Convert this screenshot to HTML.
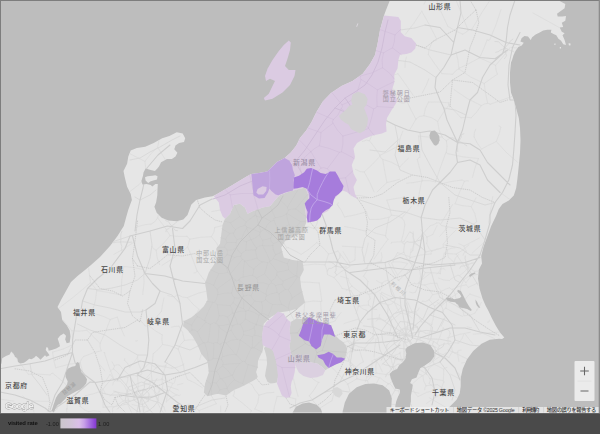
<!DOCTYPE html><html><head><meta charset="utf-8"><title>map</title>
<style>html,body{margin:0;padding:0;background:#bdbdbd;overflow:hidden}body{width:600px;height:434px;position:relative;font-family:"Liberation Sans",sans-serif}svg{position:absolute;left:0;top:0;display:block}svg text{font-family:"Liberation Sans","Noto Sans CJK JP",sans-serif}</style></head><body>
<svg width="600" height="434" viewBox="0 0 600 434">
<rect width="600" height="434" fill="#bdbdbd"/>
<path d="M390 0 L386 10 L383.8 16 L380 30 L377.5 44 L375 55 L370 64 L362.5 74 L352.5 81 L341.5 86 L331 93 L322.8 101.5 L316.6 111.8 L311.4 122.2 L306.2 130.5 L300 138 L296.3 145.5 L290.8 152.4 L284.6 158 L277 162.1 L271.5 167.6 L267.3 171.5 L257.6 173.2 L251.4 173.9 L246.6 176.6 L238.3 181.5 L230 186.5 L217.5 193.8 L212.5 196.2 L205 197.6 L196.1 200 L191.2 204.8 L190 208.3 L187.5 215 L183.3 219.4 L176.7 221.2 L168.3 220.4 L161.7 217.7 L156.7 212.7 L154.4 206.7 L156.1 202.4 L157.3 195.2 L157.5 189.2 L157.8 184 L156.5 169.5 L159 166.4 L161.1 162.3 L167 158.9 L171.9 158.9 L175.5 156.5 L177.4 152.8 L174.3 149.2 L175.5 145.6 L179.1 143.1 L184 141.9 L185.2 138.3 L182.7 133.5 L176.7 132.3 L169.4 135.9 L162.2 138.3 L153.7 143.1 L145.2 146.8 L136.8 148 L130.7 150.4 L128.3 156.5 L127.1 163.7 L123.5 171 L124.7 177 L127.1 186.7 L130.7 194 L131.9 200 L130 205 L128.3 209.7 L126.5 216 L123.8 226 L117.5 236 L110 246 L100 257 L91 265 L85 270 L77.5 276 L71 282 L66 291 L61 300 L57.5 307 L61 312 L62.2 320 L66.7 325.2 L69.7 330.5 L70.5 336.5 L69.7 342.5 L66.7 343.2 L65.2 339.5 L66 335.7 L63.7 333.5 L60 335.7 L57.7 338.7 L59.2 343.2 L60 346.2 L56.2 348.5 L51.7 350 L48.7 350.7 L48 347.7 L46.5 347 L45.7 350 L48 353 L49.5 355.2 L46.5 356.7 L45 355.2 L42.7 357.5 L40.5 359.7 L38.2 357.5 L36 355.7 L34.5 357.5 L31.5 359.3 L29.2 358.7 L26.2 361.2 L24 362.7 L20.2 363.5 L18 362 L17.2 358.2 L15 356.7 L13.5 353.7 L11.2 351.5 L9.7 354.5 L6 356 L2.2 358.2 L1.5 363.5 L0 365 L0 434 L438 434 L442 413 L449.3 407 L452.4 403.9 L456.6 399.8 L459.7 393.6 L460.7 386.3 L460.7 378 L462.8 368.7 L466.9 359.4 L473.2 351 L481.5 343.8 L489.7 339.7 L499 338.8 L502 339 L504.3 337.4 L500 332.4 L496 326 L492 318.5 L488.5 311 L485.5 305.5 L482.5 298.5 L479.5 288.5 L478 278.5 L478.8 269.8 L482 263.5 L481.2 256 L483.8 246 L487.5 236 L491.2 226 L496 216 L498.8 209 L502.5 204 L508.8 200.5 L513.8 195.5 L516.2 188 L517.5 178 L518.8 165.5 L520 153 L520.5 140.5 L520 128 L518.8 118 L516 108 L513.8 100 L511 92.5 L510 82.5 L510 72.5 L511 62.5 L512.1 60 L513.5 55.3 L515.5 51.1 L518.3 47 L521.7 45.6 L523.8 42.8 L520.4 41.5 L521.7 38 L524.5 35.9 L528 36.6 L530.7 40.1 L532.1 37.3 L535.6 34.5 L539.7 32.5 L543.2 30.4 L547.3 29.7 L551.4 29.7 L550.8 32.5 L553.5 33.9 L556.3 35.2 L558.4 38.7 L561.1 40.8 L563.2 44.2 L566 44.9 L564.6 40.1 L562.5 35.2 L564.6 33.2 L561.8 31.8 L559.7 27.6 L563.2 27 L561.8 22.8 L565.3 20.7 L566 15.9 L562.5 16.6 L557.7 16.6 L557 13.8 L559.7 11.7 L564.6 8.3 L565.3 4.1 L557.7 0Z" fill="#e6e6e6"/>
<path d="M288.8 40.5 L290.8 42.5 L290 50 L287.5 58.8 L285 66 L288.8 70 L295.5 70 L294.5 76 L290 85 L282.5 92.5 L272.5 98.8 L265 100.5 L263.8 98 L268.8 93.8 L272.5 86 L275 81 L270 78.8 L266 81 L265 76 L267.5 68.8 L272.5 60 L278.8 51 L283.8 45Z" fill="#dbcbe2"/>
<path d="M356.2 26.6 L357.6 23.2 L358.4 23.6 L357 27Z" fill="#dcd8de"/>
<path d="M568.4 43.4 L570.3 43.2 L570.6 45.2 L569 45.6Z" fill="#e6e6e6"/>
<path d="M559.8 47 L561 47 L561 48.4 L559.8 48.4Z" fill="#e6e6e6"/>
<path d="M554.4 43.6 L555.6 43.6 L555.4 45 L554.4 45Z" fill="#e6e6e6"/>
<clipPath id="lc"><path d="M390 0 L386 10 L383.8 16 L380 30 L377.5 44 L375 55 L370 64 L362.5 74 L352.5 81 L341.5 86 L331 93 L322.8 101.5 L316.6 111.8 L311.4 122.2 L306.2 130.5 L300 138 L296.3 145.5 L290.8 152.4 L284.6 158 L277 162.1 L271.5 167.6 L267.3 171.5 L257.6 173.2 L251.4 173.9 L246.6 176.6 L238.3 181.5 L230 186.5 L217.5 193.8 L212.5 196.2 L205 197.6 L196.1 200 L191.2 204.8 L190 208.3 L187.5 215 L183.3 219.4 L176.7 221.2 L168.3 220.4 L161.7 217.7 L156.7 212.7 L154.4 206.7 L156.1 202.4 L157.3 195.2 L157.5 189.2 L157.8 184 L156.5 169.5 L159 166.4 L161.1 162.3 L167 158.9 L171.9 158.9 L175.5 156.5 L177.4 152.8 L174.3 149.2 L175.5 145.6 L179.1 143.1 L184 141.9 L185.2 138.3 L182.7 133.5 L176.7 132.3 L169.4 135.9 L162.2 138.3 L153.7 143.1 L145.2 146.8 L136.8 148 L130.7 150.4 L128.3 156.5 L127.1 163.7 L123.5 171 L124.7 177 L127.1 186.7 L130.7 194 L131.9 200 L130 205 L128.3 209.7 L126.5 216 L123.8 226 L117.5 236 L110 246 L100 257 L91 265 L85 270 L77.5 276 L71 282 L66 291 L61 300 L57.5 307 L61 312 L62.2 320 L66.7 325.2 L69.7 330.5 L70.5 336.5 L69.7 342.5 L66.7 343.2 L65.2 339.5 L66 335.7 L63.7 333.5 L60 335.7 L57.7 338.7 L59.2 343.2 L60 346.2 L56.2 348.5 L51.7 350 L48.7 350.7 L48 347.7 L46.5 347 L45.7 350 L48 353 L49.5 355.2 L46.5 356.7 L45 355.2 L42.7 357.5 L40.5 359.7 L38.2 357.5 L36 355.7 L34.5 357.5 L31.5 359.3 L29.2 358.7 L26.2 361.2 L24 362.7 L20.2 363.5 L18 362 L17.2 358.2 L15 356.7 L13.5 353.7 L11.2 351.5 L9.7 354.5 L6 356 L2.2 358.2 L1.5 363.5 L0 365 L0 434 L438 434 L442 413 L449.3 407 L452.4 403.9 L456.6 399.8 L459.7 393.6 L460.7 386.3 L460.7 378 L462.8 368.7 L466.9 359.4 L473.2 351 L481.5 343.8 L489.7 339.7 L499 338.8 L502 339 L504.3 337.4 L500 332.4 L496 326 L492 318.5 L488.5 311 L485.5 305.5 L482.5 298.5 L479.5 288.5 L478 278.5 L478.8 269.8 L482 263.5 L481.2 256 L483.8 246 L487.5 236 L491.2 226 L496 216 L498.8 209 L502.5 204 L508.8 200.5 L513.8 195.5 L516.2 188 L517.5 178 L518.8 165.5 L520 153 L520.5 140.5 L520 128 L518.8 118 L516 108 L513.8 100 L511 92.5 L510 82.5 L510 72.5 L511 62.5 L512.1 60 L513.5 55.3 L515.5 51.1 L518.3 47 L521.7 45.6 L523.8 42.8 L520.4 41.5 L521.7 38 L524.5 35.9 L528 36.6 L530.7 40.1 L532.1 37.3 L535.6 34.5 L539.7 32.5 L543.2 30.4 L547.3 29.7 L551.4 29.7 L550.8 32.5 L553.5 33.9 L556.3 35.2 L558.4 38.7 L561.1 40.8 L563.2 44.2 L566 44.9 L564.6 40.1 L562.5 35.2 L564.6 33.2 L561.8 31.8 L559.7 27.6 L563.2 27 L561.8 22.8 L565.3 20.7 L566 15.9 L562.5 16.6 L557.7 16.6 L557 13.8 L559.7 11.7 L564.6 8.3 L565.3 4.1 L557.7 0Z"/></clipPath>
<g fill="none" stroke-linejoin="round" stroke-linecap="round" clip-path="url(#lc)">
<path d="M406 335 L412.2 344.2 L418.5 353.3 L423.3 363.4 L426.6 374.2 M406 335 L409.7 342.1 L412.6 349.6 L419.6 354.7 L421.1 363.2 M406 335 L403.9 343.6 L404 352.6 L404.1 361.4 L398.5 369.5 M406 335 L399.9 342.3 L395 350.4 L389.2 358 L382.1 364.4 M406 335 L398.9 340.4 L391.7 345.5 L385.4 351.7 L381.2 360.3 M406 335 L395.8 336 L385.6 334.6 L375.4 334.1 L366 343.3 M406 335 L395.3 333 L384.4 332.1 L374.2 327.3 L363.3 325.9 M406 335 L397.4 329.3 L388.4 324.1 L380 318 L367.7 319.3 M406 335 L399.2 326.1 L393.1 316.6 L388 306.6 L382.2 296.9 M406 335 L404.8 325.4 L403.2 315.8 L400.8 306.3 L400.1 296.6 M406 335 L407.4 327.1 L408.4 319.1 L408.5 311 L406.4 302.8 M406 335 L414.1 326.2 L423.3 318.4 L428.3 306.7 L438.5 299.7 M406 335 L416 332.4 L426.1 330.4 L436.7 331.7 L443.8 318.6 M406 335 L417.2 336.6 L428.3 338.9 L439.7 339.2 L450.8 341.4 M406 335 L413.5 338.2 L421.3 340.4 L428.4 344.4 L436 347.3 M401.8 340.3 L400.2 337.8 L399.2 335 L399.8 332 L401.7 329.6 L404.5 328.5 L407.3 329.2 L409.9 330.1 L411.6 332.3 L412.9 335 L412.6 338.1 L410.5 340.6 L407.6 342 L404.4 342.1 L401.8 340.3 M405.6 348.9 L399.1 348.3 L394.4 343.6 L393.8 337.4 L394.1 331.9 L396.7 327.1 L400 321.5 L406.4 322 L411.8 323.9 L417.4 326.5 L419.1 332.5 L418 338.2 L415.7 343.3 L411.6 347.8 L405.6 348.9 M418.4 356.9 L407.6 358.8 L396.1 359.6 L387.6 351.8 L382.9 341.9 L381.3 331.1 L387.7 322.3 L393.9 313.7 L404.4 310.3 L414.7 313.4 L422.9 319.6 L432.5 327.1 L430.9 339 L425.3 348.4 L418.4 356.9 M141.5 397 L146.3 396.7 L151.1 396.4 L156 396.2 L160.5 393.7 M141.5 397 L147.4 398.9 L153.3 400.9 L159.3 402.6 L164.2 407 M141.5 397 L145 403.1 L148.9 409 L154.1 414.1 L159.3 419 M141.5 397 L142.1 402.4 L143.1 407.9 L143.7 413.3 L146.8 418.3 M141.5 397 L140.2 402.3 L137.9 407.4 L136.8 412.8 L138.7 418.8 M141.5 397 L135.3 399.4 L129 401.7 L122.5 403.5 L117.6 408.9 M141.5 397 L134.6 395.4 L127.7 393.7 L120.6 393 L113.8 391.1 M141.5 397 L135.7 393 L129.5 389.7 L125.1 383.8 L120.4 378.6 M141.5 397 L139 391.4 L136.3 386 L132.5 381 L129.8 375.6 M141.5 397 L142.6 392 L144.5 387.3 L144.2 381.9 L149.3 378.1 M141.5 397 L145.8 392.9 L150.2 388.9 L153.7 384 L156.8 378.8 M134 396.5 L134.3 392.9 L137.1 390.6 L140.5 390.3 L143.9 389.3 L146.9 391.2 L149.2 394 L148.4 397.5 L148.4 401 L145.3 402.5 L142.7 404.7 L139.4 403.8 L136.7 402.1 L133.9 400 L134 396.5 M153.7 406.6 L148.3 411 L141.6 413.8 L135.3 410.1 L130.3 406.1 L125 400.9 L126.6 393.7 L128.7 386.9 L135.5 384.6 L141.4 382 L147.6 384.1 L154.1 386.9 L155.1 393.8 L158.3 400.7 L153.7 406.6 M505 48 L505.1 50.7 L505.7 53.3 L506.5 55.9 L504.3 58.8 M505 48 L502.8 49.2 L500.4 50.1 L498.3 51.6 L495.8 52.3 M505 48 L502.8 46 L500.7 43.8 L498.5 41.7 L494.9 41.5 M505 48 L506.7 45.6 L508.9 43.6 L510.4 40.9 L512.9 39.2 M505 48 L507.9 49.2 L510.6 50.7 L513.7 51.4 L515.6 54.5 M120.6 242 L121.2 244.2 L121.8 246.4 L121.5 248.8 L121.9 251 M120.6 242 L118.5 242 L116.4 242.2 L114.3 242.6 L112.2 242.7 M120.6 242 L120.9 239.3 L120.7 236.6 L120.9 233.9 L122 231.3 M120.6 242 L123.3 241.9 L126.1 242.1 L128.8 242.4 L131.5 242.1 M171.6 226 L169.9 223.9 L168.5 221.7 L165.7 220.6 L164.6 217.9 M171.6 226 L173.6 224.5 L175.7 223 L177.4 221.2 L179.9 220.2 M171.6 226 L172.9 227.3 L174 228.9 L175.2 230.3 L177.5 230.7 M171.6 226 L170.1 227.3 L168.7 228.8 L166.6 229.3 L165.9 231.7 M414.6 242 L413.7 244.6 L413 247.3 L412.9 250.2 L411 252.5 M414.6 242 L412.1 242.2 L409.5 242.3 L407 241.6 L404.6 243.7 M414.6 242 L413.9 239.3 L413 236.7 L413.4 233.8 L409.9 232 M414.6 242 L416.8 241.1 L419 240.3 L421.5 240.2 L423.2 237.8 M414.6 242 L416.5 244 L418.7 245.7 L421 247.3 L423 249.2 M336 266 L336 268.2 L336 270.4 L334.9 272.5 L336.6 274.8 M336 266 L333.6 267 L331.4 268.3 L328.7 268.4 L327.3 271.4 M336 266 L334.4 264.7 L333 263.1 L331 262.2 L328.9 261.6 M336 266 L337.2 263.1 L338.2 260.1 L339.9 257.4 L340 254.1 M336 266 L338.5 266.7 L341 267.3 L343.7 267.1 L346.4 266.9 M466.5 265 L464.8 265.6 L463 266 L461.1 266 L459.9 268.1 M466.5 265 L466 262.8 L465.7 260.6 L465 258.4 L465.3 256.1 M466.5 265 L468.3 264.3 L470.1 263.9 L471.9 263.1 L473.8 263 M466.5 265 L467.2 267.3 L467.7 269.6 L468 271.9 L469.4 274 M459 141 L456.8 139.9 L454.6 138.7 L452.4 137.7 L449.6 138.1 M459 141 L460 139.1 L461.3 137.2 L461.2 134.8 L463.9 133.7 M459 141 L461 142.1 L463 143.1 L464.8 144.5 L466.7 145.7 M459 141 L458.1 143.5 L457.3 146 L457.6 148.8 L457.7 151.5 M436 351 L437.9 352.7 L439.8 354.3 L441.2 356.5 L443 358.3 M436 351 L435.2 353.4 L434.9 356 L434.5 358.5 L431.8 360.3 M436 351 L433.9 351 L431.7 351.3 L429.6 351 L427.5 350.6 M436 351 L435 348.7 L433.7 346.5 L432.5 344.3 L433.7 341.2 M436 351 L438.3 349.3 L440.9 348 L443.2 346.3 L444.3 343.1 M392.7 367 L395.4 366 L397.7 364.2 L400.9 364.3 L403.5 363 M392.7 367 L394 369.9 L394.9 372.9 L396.8 375.5 L398.5 378.2 M392.7 367 L390.9 369.4 L389.5 372.1 L386.7 373.7 L385.7 376.8 M392.7 367 L390.2 366.3 L387.8 365.4 L385.3 365 L383 363.7 M392.7 367 L393.5 364.3 L394.6 361.8 L394.9 359 L397.3 356.9" stroke="#d5d5d5" stroke-width="0.75"/>
<path d="M559.9 27.9 L532.9 12.9 M0 399.1 L13.7 401.1 M19.5 432.5 L18.9 434 M468.2 30.4 L465.9 32.3 L462.7 34.2 M468.2 30.4 L456 0 M436.6 0 L439.7 8.8 L447.8 26.3 M447.8 26.3 L454.9 30.6 L462.7 34.2 M424.1 4.1 L426 0 M421.8 11.2 L429.2 24.5 L436.4 38.5 M405.4 34.3 L413.8 23.3 L421.8 11.2 M403 36 L383.5 23.8 L382 22.7 M148.5 175.6 L145.9 169.4 L144.9 161.4 M165.4 159.8 L157.7 147.2 M144.9 161.4 L150.6 154 L157.7 147.2 M129.6 191.8 L138.3 185.1 L148.5 175.6 M129.5 153.5 L144.9 161.4 M159 140.1 L157.7 147.2 M52.6 352.1 L53.7 360 L55.7 367.8 M52.6 352.1 L63.5 348.9 L72.9 344.6 M55.7 367.8 L68.7 364.3 L80.1 362.7 M80.1 362.7 L81.5 359.1 L83.5 356.6 M499.7 332 L473.3 334.2 M431.4 43.6 L433 41 L436.3 40.4 M468.2 30.4 L470.4 29.4 L471.3 30.1 M490.1 0 L481.8 12.8 L471.3 30.1 M376.3 49.2 L381.2 51 M401.8 42.6 L391.6 45.9 L381.2 51 M492.7 196.6 L490.6 209.9 L488.6 223.3 M476 197.9 L473.9 202.1 L471.1 206.6 M471.1 206.6 L474.8 213.5 L476.7 221.7 M498.9 191.6 L509.8 199.4 M460.2 291.3 L461.2 285.5 L464 279.3 M470.9 275.3 L467.1 277.4 L464 279.3 M470.9 275.3 L478.4 274.3 M476.5 310.3 L477.2 309.9 L477 309.8 M317.4 110.4 L319.2 110.4 L334.1 108.7 M340.4 103.5 L337.6 106.3 L334.1 108.7 M301.2 254.4 L295 250.9 L288.2 247.6 M301.2 254.4 L309 249.2 L316.8 242.6 M302.7 226.8 L308.2 226.7 L314.1 228.6 M429.2 397.7 L447.7 408.4 M460.7 379.5 L450.8 374.3 M437.4 384.6 L457.5 398.1 M470.3 332.3 L459.5 334.4 L447.1 338 M467.3 358.9 L447.9 349.8 M12.1 352.4 L14.4 355.4 M15.6 357.1 L17.5 359.7 M20.3 363.5 L28.3 374.3 M34.5 422 L33.9 412.1 L32 400.9 M23 396.3 L26.7 399.5 L32 400.9 M142.7 294.6 L144 282.8 L143.6 269.6 M121.4 295.5 L121.6 294.9 L121.2 295.1 M121.2 295.1 L121.7 279.9 L123.9 266.5 M123.9 266.5 L133.5 267.5 L143.6 269.6 M88.5 267.1 L90.5 282.8 M90.5 282.8 L94.6 287.4 L96.7 290.7 M96.7 290.7 L108.5 292.5 L121.2 295.1 M197.2 271.2 L195.6 272.7 L193.9 272.9 M197.2 271.2 L192.8 259.3 L187.7 246.9 M187.7 246.9 L175 257.1 L162.1 265.3 M219.3 248 L216.2 242.5 L211.4 236.7 M219.3 248 L218.2 252.6 L216.8 256.1 M211.4 236.7 L200.6 237.3 L189.7 239.2 M187.7 246.9 L188.5 244 L189.7 239.2 M86.9 330.3 L79.2 331.2 L71.8 330.7 M94.6 313.7 L93.1 312.6 L92.4 311 M71.8 330.7 L63.7 320.9 L62.1 319.2 M72.9 344.6 L72.8 337.3 L71.8 330.7 M83.5 356.6 L93 352.9 L101.2 350.8 M101.2 350.8 L100.1 346.8 L100.1 343.5 M100.1 343.5 L94.2 337.5 L86.9 330.3 M100.1 343.5 L105.6 331.5 L110.2 319.5 M110.2 319.5 L103.1 316.3 L94.6 313.7 M90.5 282.8 L74 296.6 L58.6 308.5 M96.7 290.7 L95.4 300.6 L92.4 311 M267.1 184.8 L253.6 186.7 L239.7 187.1 M239.7 187.1 L236 182.9 M471.1 206.6 L462.2 205.6 L455.1 203.8 M468.5 181 L466.7 180.7 L464.4 181.3 M455.1 203.8 L459 193.5 L464.4 181.3 M442 73.6 L434.7 63.8 L428.4 54.6 M406.4 57 L405.1 62.7 L405 67.4 M431.4 43.6 L428.9 49.9 L428.4 54.6 M517.6 48 L511.2 47.4 M501 9.6 L496.1 24.4 L489.9 39.4 M487.1 40 L489.1 40.5 L489.9 39.4 M355.3 79.1 L353.1 88 L347.6 103.3 M361.3 74.8 L367.7 77.2 L377.8 80.2 M373.9 111.3 L365 111 L354.6 109.8 M340.4 103.5 L344.4 103.8 L347.6 103.3 M383.5 78.2 L380.6 79.3 L377.8 80.2 M383.5 78.2 L386.1 77.5 L387.4 78.2 M398.1 73.8 L393.1 75 L387.4 78.2 M422.3 93 L426.2 85.3 L428.9 78.6 M398.1 73.8 L406.2 85.2 L413.2 95.4 M464.4 181.3 L462.6 180.2 L461.2 180.1 M461.2 180.1 L450.3 181.7 L438.5 184.6 M476.7 221.7 L470.8 226.4 L466.1 229.6 M440.5 224.4 L446 215.1 L452.5 204.7 M441.3 225.5 L453.8 228 L466.1 229.6 M470.9 275.3 L463.2 264.6 L456.2 254.1 M468.9 244.9 L462.3 250.4 L456.2 254.1 M456.2 254.1 L450.1 253.7 L444.3 253.2 M440.3 273.5 L441.5 264.1 L444.3 253.2 M267.1 184.8 L270.7 190 L275.6 196.2 M295.9 172.1 L296.6 177.5 L295.5 182.3 M275.6 196.2 L279.8 196.8 L285.1 196.8 M290.4 152.8 L291.1 153.9 L298.5 167.4 M415.5 292.2 L419.6 283.3 L425.3 272.6 M440.3 273.5 L433.1 272.8 L425.3 272.6 M460.2 291.3 L451.1 297.7 L441.2 306 M440.3 273.5 L440.8 273.7 L440.3 273.5 M437.2 302.5 L438.8 303.4 L441.2 306 M441.2 306 L442.4 307.8 L443.1 311.3 M110.2 319.5 L112.8 318.6 L117.3 317.1 M437.4 384.6 L432 385.1 L426.1 385.7 M446.3 352.8 L437 358.3 L429.1 364.1 M422.9 375.8 L423.6 380.9 L426.1 385.7 M424.6 389.9 L424.9 387.9 L426.1 385.7 M88.4 411.7 L84.2 409.6 L80 406.2 M88.4 411.7 L93.1 410.9 L99.7 411.4 M101.8 390.9 L103 398.1 L103.1 407.2 M101.8 390.9 L94 393.6 L85.4 395.7 M80 406.2 L83.4 400.7 L85.4 395.7 M83.2 376.5 L83.1 378.8 L81.3 380.2 M109.9 380.7 L105.5 385.9 L101.8 390.9 M52.8 373.3 L60.2 379.4 L66.4 384.8 M52.8 373.3 L51 373.8 L50.1 374.9 M66.4 384.8 L67.4 396.3 L67.1 408.6 M48.4 401.3 L52.8 404.6 L57.3 408.6 M66.4 409.1 L67.7 409.2 L67.1 408.6 M83.2 376.5 L82.1 369.3 L80.1 362.7 M28.3 374.3 L38.6 374.2 L50.1 374.9 M32 400.9 L40.7 401.3 L48.4 401.3 M34.5 422 L39.6 421.3 L45.7 422.3 M45.7 422.3 L51.4 414.6 L57.3 408.6 M45.7 422.3 L49 434 M70.2 434 L66.4 409.1 M158.5 214.5 L157.6 217.8 M187 236.4 L177.7 236.4 L170.1 235.6 M157.6 217.8 L164.1 226.4 L170.1 235.6 M159.6 264.6 L157.2 257.8 L156.2 250.1 M189.7 239.2 L187.6 236.8 L187 236.4 M170.1 235.6 L163.1 243.8 L156.2 250.1 M219.3 248 L226.2 247.9 L233.4 248.6 M211.4 236.7 L214 232 L214.7 227.5 M243.9 233.1 L239.3 239.2 L235.7 247.1 M243.9 233.1 L239.4 228.4 L235.1 223.9 M233.4 248.6 L234.3 248.3 L235.7 247.1 M235.1 223.9 L225.1 225 L214.7 227.5 M407.3 102.1 L403 103.2 L399.5 102.3 M407.3 102.1 L411.5 110.9 L415.9 119.1 M415.9 119.1 L412.8 124.7 L410 129.4 M387.4 78.2 L393.9 90.7 L399.5 102.3 M381.5 119.2 L382.3 119.8 L382.2 119.2 M381.5 119.2 L378.2 114.7 L373.9 111.3 M377.2 191.9 L382.8 186.3 L386.9 182.6 M386.9 182.6 L394 180.9 L399.6 179.2 M403.4 197.3 L394.8 198.7 L386.9 200.2 M412.2 265.7 L407.6 259.3 L403.7 252.3 M426 251.9 L420.4 246.6 L413.9 243.4 M403.7 252.3 L403.8 249 L404.6 244.3 M425.3 272.6 L422.4 269.5 L418.8 266.5 M441.1 248.4 L433.5 250.2 L426 251.9 M316.8 242.6 L323.3 247.9 L328.5 254 M303.5 265.3 L314.7 264.1 L324.9 264.8 M328.5 254 L327.1 258.7 L324.9 264.8 M303.5 265.3 L299.9 270.5 L296.3 277.6 M298.4 281.9 L309.3 282.3 L319.2 283 M324.9 264.8 L327 270.1 L327.5 274.6 M328.5 254 L332.3 253.1 L337.9 251.1 M337.9 251.1 L344 259 L349.9 266.5 M349.9 266.5 L341.1 271.7 L333.9 277.5 M333.9 277.5 L331.1 276.3 L327.5 274.6 M239.7 187.1 L240.6 190.5 L240.6 193.6 M211.8 211.6 L223.8 209.3 L236.9 207.2 M240.6 193.6 L238.3 201.1 L236.9 207.2 M238.5 211.7 L237.2 210.2 L236.9 207.2 M275.8 230 L269.2 232.2 L260.7 233.8 M278.5 226 L272.3 217 L267.9 206.3 M256.7 230.7 L259.3 231.9 L260.7 233.8 M256.7 230.7 L257.5 224.9 L256.5 217.6 M256.5 217.6 L259.2 212.9 L261.9 209.1 M302.7 226.8 L299.3 222.5 L294 219.4 M288.2 247.6 L287.5 247.5 L286.8 247.9 M286.8 247.9 L281.7 239.9 L275.8 230 M294 219.4 L292.8 213.2 L292.3 205.3 M275.6 196.2 L272.4 201 L267.9 206.3 M285.1 196.8 L289.6 200.5 L292.3 205.3 M238.5 211.7 L246.9 214.2 L256.5 217.6 M415.5 292.2 L412.8 292.9 L409.9 292.2 M401.1 307.4 L405.8 312 L411.8 318 M412.2 265.7 L406.2 273.7 L398.8 280.2 M388.7 263.1 L395.3 256.8 L403.7 252.3 M388.7 263.1 L393 272 L398.1 280.1 M398.8 280.2 L399.3 280.6 L398.1 280.1 M197.5 271.3 L203.6 279.3 L210.9 286.2 M233.4 248.6 L238.8 263.7 L245.7 276.8 M245.7 276.8 L241.8 279 L238.3 282.9 M229.4 280.8 L233.2 282.5 L238.3 282.9 M296.4 295.7 L296.6 288 L298.4 281.9 M296.4 295.7 L291.5 299.6 L285.2 302.2 M285.2 302.2 L285.7 301.5 L284.3 302.3 M296.3 277.6 L293.9 275.9 L290.9 275.7 M290.9 275.7 L281.4 280.8 L270.8 285.1 M284.3 302.3 L277 294.5 L270.8 285.1 M99.7 411.4 L104.3 417.7 L108.2 424.5 M108.2 424.5 L108.5 434 M137 226.8 L145 224.7 L151.2 224.1 M113.9 254.3 L122.7 249.5 L133.1 242.7 M156.2 250.1 L153.4 248.7 L152.1 246.4 M157.6 217.8 L155.3 221.3 L151.2 224.1 M247.7 276.3 L253.1 263.9 L259.1 253.1 M262.1 250.9 L260.3 252.5 L259.1 253.1 M277.5 257 L278.3 257.5 L277.8 259.5 M235.7 247.1 L248.1 249.6 L259.1 253.1 M245.7 276.8 L246.7 277.1 L247.7 276.3 M265.9 283.9 L264.8 281.6 L262.5 280.4 M260.7 233.8 L261.2 241.8 L262.1 250.9 M399.9 166.8 L391.3 162.2 L382.7 159.4 M399.9 166.8 L403.9 162.6 L408.2 158.6 M398.9 145.5 L389.6 150.7 L380 155.3 M382.7 159.4 L381 158.2 L380 156.2 M380 156.2 L379.1 156.1 L380 155.3 M386.9 182.6 L384.8 171.4 L382.7 159.4 M406.6 183.2 L413.9 182.5 L421.7 181 M422.3 180.7 L422.1 180.6 L421.7 181 M422.3 180.7 L420.4 171.1 L417.3 159.7 M381.5 119.2 L374.5 129.1 L369.5 140.8 M369.5 140.8 L374.7 147.5 L380 155.3 M402.8 131.2 L399.9 138.8 L398.9 145.5 M374.1 192 L369.5 181.7 L364.2 172 M364.2 172 L372.7 164 L380 156.2 M369.5 140.8 L366.4 140.2 L362.4 141.5 M364.2 172 L360.3 171.7 L355.5 169.4 M417.3 159.7 L418.8 157.6 L419.8 157.3 M419.8 157.3 L419.6 146 L418.5 136.1 M435.5 181.9 L440.2 168.1 L445.7 153 M435.5 181.9 L429.3 180.7 L422.3 180.7 M421.7 181 L419.2 193.4 L418 206.1 M440.5 224.4 L439.3 222.9 L436.4 223 M413.9 243.4 L422.3 234.3 L430.3 225.7 M436.4 223 L433.9 224.5 L430.3 225.7 M295.5 182.3 L305.9 186.7 L317.8 192 M292.3 205.3 L303 203.7 L312.2 201.1 M317.8 192 L314.9 196.2 L312.2 201.1 M315.4 164.2 L318 178.1 L321.9 190 M317.8 192 L319.5 191.2 L321.9 190 M347.4 178.1 L348.7 187.5 L351.2 195.7 M368.1 197.2 L359.7 195.5 L351.2 195.7 M334.1 108.7 L333.8 118.2 L332.8 127.4 M328 131 L331.4 128.2 L332.8 127.4 M332.8 127.4 L340.7 128.2 L348.6 127.7 M342.4 158.6 L341.2 150.5 L340.8 144.4 M340.8 144.4 L333.1 140.7 L326.1 138.8 M319.3 147.3 L320.7 145.2 L320.6 144.3 M315.4 164.2 L317.8 161.9 L320.1 159.5 M336.9 178.7 L333.2 170.1 L330.6 162.4 M351.1 161.4 L347.2 159.9 L342.4 158.6 M353.3 136.6 L347.7 141.5 L340.8 144.4 M328 131 L327.3 135 L326.1 138.8 M296.8 144.4 L302.2 145.3 L319.3 147.3 M306.7 129.8 L320.6 144.3 M250.4 305.4 L256.4 303.4 L262.1 301.8 M262.1 301.8 L268.5 305.6 L274.3 310.1 M238.3 282.9 L239.3 291.7 L239.7 301.9 M239.7 301.9 L244.4 303.6 L250.4 305.4 M284.3 302.3 L278.9 305.4 L274.3 310.1 M239.7 301.9 L234.4 307.1 L230.2 314 M262.8 329.7 L259.3 330 L253.9 332.2 M230.2 314 L241.1 322.3 L253.9 332.2 M103.1 407.2 L115.8 406.5 L127.8 403.8 M127.8 403.8 L127.6 404 L127.9 404.5 M135.5 434 L137.2 426.7 M127.9 404.5 L133.2 416.6 L137.2 426.7 M401.1 307.4 L394.2 313.8 L385.6 320.6 M396.1 332.4 L404.2 327.8 L412.8 323.6 M441.7 331.7 L433.9 333 L425.6 333.3 M412.8 323.6 L418.4 329.3 L425.6 333.3 M320.4 434 L308.8 421.3 M335.9 426.7 L327.3 419.2 L319.7 412.6 M308.8 421.3 L313.6 416.7 L319.7 412.6 M295.1 434 L295.2 423.8 M308.8 421.3 L301.1 423 L295.2 423.8 M331.9 400.7 L325.6 404.5 L320.3 408 M319.7 412.6 L320.5 411.3 L320.3 408 M329.1 364.6 L337.9 373.5 L347.7 384 M318.4 382.5 L318 382.3 L319.2 382.3 M318.4 382.5 L314.3 389.5 L309.3 395.8 M331.9 400.7 L333.4 395.5 L334.7 390.8 M320.3 408 L314.5 402.6 L309.3 395.8 M411.3 404.7 L413.5 415.3 L414.5 426.6 M411.6 434 L411.9 431.7 M411.9 431.7 L412.7 428.1 L414.5 426.6 M411.3 404.7 L398.2 404.8 L386.5 404 M401.8 217.9 L404.2 221.1 L404.8 224.8 M401.8 217.9 L397.4 215.9 L391.4 215.2 M391.4 215.2 L390 216.9 L388.9 217.3 M388.9 217.3 L387.2 226 L385.6 235.7 M404.8 224.8 L403.5 233.1 L401.5 240.7 M385.6 235.7 L386.1 237.5 L388.1 239.2 M411.2 206.8 L407.5 211.4 L401.8 217.9 M386.9 200.2 L389.5 207.7 L391.4 215.2 M369.6 219.5 L379.4 219.4 L388.9 217.3 M369.6 219.5 L367.6 215.9 L366.4 211.8 M367.7 229.3 L375.6 233.3 L385.6 235.7 M404.6 244.3 L402.2 242.9 L401.5 240.7 M374.1 258.9 L381.2 248.6 L388.1 239.2 M365.7 231.2 L365.8 230.2 L367.7 229.3 M344.5 216.9 L341.5 210.6 L338.1 205.8 M341.8 229.8 L328.3 228.3 L315 227.8 M315 227.8 L316.9 223.9 L318 219.9 M366.4 211.8 L354.9 215 L344.5 216.9 M338.3 202.8 L337.3 204.8 L338.1 205.8 M365.7 231.2 L355.6 228.6 L344.5 226.5 M314.1 228.6 L313.7 228.7 L315 227.8 M362.8 247.4 L353.4 246.8 L342.3 246.2 M210.9 286.2 L210.5 287.8 L209.7 290.3 M179.1 295.3 L182.6 297.1 L187.3 297.6 M209.7 290.3 L198.3 293.2 L187.3 297.6 M272.2 356.8 L269.7 342.8 L266.5 330.1 M253.9 332.2 L247.3 339.4 L242.3 345.8 M270.2 360.2 L259.4 359.8 L248.3 360.9 M242.3 345.8 L244.8 354 L248.3 360.9 M139.3 318.9 L142.6 323 L144.9 325.3 M117.3 317.1 L120.6 327.4 L124.4 335.9 M135.7 341 L137.1 341 L137.4 340.5 M160.5 434 L164.6 414.1 M173.9 414.9 L168.3 414.1 L164.6 414.1 M127.8 403.8 L129.1 401.4 L128.8 400.6 M157.6 402.9 L160.6 408.6 L164.2 413.9 M164.6 414.1 L163.9 414.7 L164.2 413.9 M396.1 332.4 L396.6 333.7 L396 335 M396 335 L403.7 341.8 L409.5 348.2 M422.9 375.8 L413.2 371.3 L402.7 367.5 M409.5 348.2 L406.5 355.4 L401.6 361.4 M418.8 393.2 L406.7 390.2 L395.9 388 M386.5 404 L387 403.7 L386 402.3 M395.9 388 L391.6 396.1 L386 402.3 M395.9 388 L395.7 381.6 L395 375.3 M385.6 320.6 L378.9 319.2 L372.7 318.5 M372.7 318.5 L373.5 328.3 L373.1 338.5 M396 335 L391.5 340.4 L386.8 345.1 M401.6 361.4 L395.1 356.7 L387.2 353 M386.8 345.1 L386.7 348.4 L387.2 353 M365.9 310 L363 309 L360.2 306.8 M360.2 306.8 L355.4 298.5 L351 290.8 M363.1 270 L364.9 269.3 L366.2 268.6 M401.1 306.4 L391 300.7 L379.9 293.1 M367.4 313.9 L367.6 311 L365.9 310 M333.9 277.5 L338.3 282.6 L342.3 288.6 M342.3 288.6 L347.2 289.5 L351 290.8 M371 259.7 L368.8 263.4 L366.2 268.6 M341 312.6 L337.7 316.8 L335.1 320.9 M321.8 317.4 L321 308.8 L320.6 301.5 M335.1 320.9 L333.2 321.7 L329.5 322.7 M321.7 300.5 L321.9 301.5 L320.6 301.5 M304.8 302.2 L313.6 301 L320.6 301.5 M304.8 302.2 L303.8 313.5 L304 324.2 M319.2 283 L320.6 292.4 L321.7 300.5 M296.4 295.7 L299.9 299.5 L304.8 302.2 M289.5 352.6 L281.2 354.3 L272.2 356.8 M289.5 352.6 L289.9 352 L291.1 350.1 M270.4 327.5 L280.9 328.4 L289.5 330.3 M291.1 350.1 L289.9 339.9 L289.5 330.3 M285.2 302.2 L291 314.7 L297.2 326.1 M289.5 330.3 L292.6 328.3 L297.2 326.1 M297.2 326.1 L299.9 324.9 L302.9 325.6 M317 355.1 L321.7 354.9 L325.6 354.6 M317 355.1 L312.2 351.6 L306.9 346.2 M325.6 354.6 L327.2 350.5 L329.7 346 M306.9 346.2 L306.9 338.3 L306.7 331.4 M306.7 331.4 L316.8 334.6 L326.4 337.2 M329.7 346 L328.4 341.5 L326.4 337.2 M328.7 360 L327.9 357.7 L325.6 354.6 M328.7 360 L329.9 362.2 L329.1 364.6 M318.4 382.5 L313.7 379.6 L308.7 374.8 M308.7 374.8 L308.4 369.4 L309.4 362.2 M289.5 352.6 L293.2 357.4 L296 361.6 M329.5 322.7 L327.2 329.4 L326.4 337.2 M349 340.9 L339.5 343.8 L329.7 346 M484.2 83.4 L491 78.6 L497.4 74.2 M484.2 83.4 L470.6 77 L458.7 68.8 M479.5 57.9 L488 61.6 L495.6 65.4 M479.5 57.9 L468.4 63.8 L458.9 68.4 M495.6 65.4 L496.2 70.8 L497.4 74.2 M458.9 68.4 L459.6 68.1 L458.7 68.8 M510 47.6 L503.2 56.4 L495.6 65.4 M487.1 40 L483.3 49.6 L479.5 57.9 M455.9 51.6 L457.9 59.7 L458.9 68.4 M442 73.6 L446.8 73.9 L452.7 74.3 M452.7 74.3 L455.4 71 L458.7 68.8 M415.9 119.1 L419.2 116.6 L423.9 115.7 M418.5 136.1 L431.3 137.3 L442.2 137.1 M442.2 137.1 L439 129.4 L437.6 121.5 M437.6 121.5 L431.7 117.7 L423.9 115.7 M428.4 102.1 L425.4 108.6 L423.9 115.7 M512.4 96.2 L510.1 97.2 L490.1 104.2 M484.2 83.4 L485.4 92.5 L487.7 103.3 M490.1 104.2 L489.5 103.6 L487.7 103.3 M202.3 434 L201.6 429 L199.1 410.5 M212.7 434 L213.6 432.6 L222.7 419.5 M220.6 406 L220.7 412.3 L222.7 419.5 M216.4 403.7 L207.1 407.4 L199.1 410.5 M182 405.7 L177.4 410.2 L173.9 414.9 M182 405.7 L186.2 405.5 L189.2 404.3 M189.2 404.3 L194.7 407.3 L199.1 410.5 M233.2 395.9 L242.5 403.1 L251.4 410.7 M251.4 410.7 L248.8 416.9 L245.1 422.5 M295.2 423.8 L293.8 422.6 L293.5 421.8 M274.8 418.6 L265.7 433.9 L265.7 434 M209.7 290.3 L211.3 298.6 L212.2 307.9 M187.3 297.6 L193.1 304.3 L199 309.3 M230.2 314 L226 315.5 L222.2 317.8 M212.2 307.9 L217.6 312 L222.2 317.8 M224.5 341.8 L223.4 331 L221.8 319 M244.2 367.5 L233.1 366.4 L223.3 367.1 M244.2 367.5 L245.3 375.1 L246 381.8 M234.4 391.1 L225.3 382.1 L216.3 373.9 M224.5 341.8 L223.1 343 L222.5 343.8 M248.3 360.9 L246.4 365 L244.2 367.5 M222.5 343.8 L222.8 355.8 L223.3 367.1 M252 384.7 L248.6 382.6 L246 381.8 M104.3 352.6 L104.6 353.2 L104.7 352.5 M104.3 352.6 L108.8 366.3 L113.7 378.8 M113.7 378.8 L116.2 380.9 L119.9 381 M109.9 380.7 L111 378.9 L113.7 378.8 M127.3 391.8 L127.3 395.6 L128.8 400.6 M127.3 391.8 L124.3 385.6 L119.9 381 M127.3 391.8 L138.8 386.4 L152.3 382.3 M151.8 363.9 L151.1 372.5 L152.3 382.3 M157.6 402.9 L158.7 395.5 L159.3 389.1 M152.3 382.3 L154.8 385.8 L159.3 389.1 M342.8 410.6 L347.7 409 L353.5 407.3 M347.7 384 L347.3 384.4 L347.8 384 M347.8 384 L351.2 395.4 L353.5 407.3 M369.5 431.4 L363.3 419.3 L356.4 408.8 M386 402.3 L379.5 398.9 L373.6 393.4 M328.7 360 L339 359.8 L348.4 361.1 M349 340.9 L350.6 341.6 L351.7 343.7 M351.7 343.7 L350.3 352.6 L348.4 361.1 M373.1 338.5 L368.3 343.9 L364.8 348.1 M351.7 343.7 L358.8 346.8 L364.8 348.1 M487.7 103.3 L484.6 103.9 L481.3 105.6 M481.3 105.6 L466.9 98.3 L454 89.6 M428.4 102.1 L439.3 102 L448.8 102.9 M437.6 121.5 L443.3 112.6 L449.1 104.9 M448.8 102.9 L448.5 104.7 L449.1 104.9 M445.7 153 L446.8 152.4 L446.4 152.3 M442.2 137.1 L443.8 139 L446.4 140.8 M446.4 140.8 L447 146.2 L446.4 152.3 M472.5 177.4 L475.2 167.2 L478.5 158.5 M478.5 158.5 L463 156.9 L449.1 153.9 M449.1 153.9 L447.6 153.8 L446.4 152.3 M274.8 418.6 L273.9 416.5 L272.8 415.9 M272.8 415.9 L264.1 412.9 L254.8 409 M233.2 395.9 L234.3 393.2 L234.4 391.1 M252 384.7 L254.8 389.8 L259 395.2 M254.8 409 L257.8 402.7 L259 395.2 M276.8 376.2 L284.5 376.2 L291.9 377.6 M277.1 396.4 L287.3 396.8 L295.8 399 M298.1 396.4 L295.8 388.2 L293.5 378.9 M273.8 372.6 L275.8 375.4 L276.8 376.2 M259 395.2 L266.6 392.9 L273.9 392.4 M296 361.6 L293.7 370.4 L291.9 377.6 M272.8 415.9 L274.5 406.3 L277.1 396.4 M293.5 421.8 L295.1 409.9 L295.8 399 M199 309.3 L195.4 315.2 L190.5 320.6 M190.5 320.6 L194.6 325.2 L200.1 328.5 M216.4 403.7 L211 395.4 L205 387.4 M178.1 389.7 L172.7 387.9 L167.3 386.2 M202.4 387.7 L194.8 382.9 L187.5 379.5 M376.9 359.7 L375.8 366 L376.1 373.1 M376.1 373.1 L371 376.6 L367.4 380.7 M367.4 380.7 L361.5 380 L356.9 378.7 M356.9 378.7 L356.3 373.3 L355.1 369.3 M364.8 348.1 L365.1 348.8 L366 351.3 M395 375.3 L385 374.4 L376.1 373.1 M348.4 361.1 L352.3 364.5 L355.1 369.3 M373.6 393.4 L369.5 387.2 L367.4 380.7 M347.8 384 L351.8 381.9 L356.9 378.7 M481.3 105.6 L476.6 112.1 L471.2 117.8 M449.1 104.9 L454.3 110.6 L461 117.8 M461 117.8 L466.3 117.2 L471.2 117.8 M446.4 140.8 L448.3 139.2 L448.5 139.3 M500.7 127.4 L499.8 126 L499.2 125.9 M475.7 129.2 L474.4 132.7 L474.1 136.9 M179.1 295.3 L176.6 295.3 L174.7 296.8 M190.5 320.6 L188 321 L183.6 320.7 M144.9 325.3 L145.7 326.2 L148.2 325.3 M148.2 325.3 L155.5 318.1 L161.4 311.4 M161.4 311.4 L162.5 305 L164 297.9 M174.7 296.8 L170.4 296.3 L167.7 295.5 M148.2 325.3 L155.3 330.8 L162.2 334.9 M171.2 327.2 L174.8 326.4 L179 326.3 M496.3 141.5 L488.1 145.5 L481.5 149.1 M496.3 141.5 L506.7 152.8 L518.1 162.7 M500.7 127.4 L499.2 133.9 L496.3 141.5 M474.1 136.9 L477.2 142.9 L481.5 149.1 M187.5 379.5 L184.7 372.6 L183.4 364.8 M179 326.3 L182.6 332.5 L184.4 340.5 M184.4 340.5 L190.4 339.7 L198.1 340.3 M222.5 343.8 L214.3 345.5 L204.2 347.8 M199.7 359.7 L201.5 353.6 L204.2 347.8 M204.2 347.8 L201.6 343.3 L198.1 340.3 M171.8 368.2 L176.9 367.3 L183.3 364.8 M171.8 368.2 L161.9 366.6 L152.5 363.2 M183.3 364.8 L180.9 356.7 L178.2 349.1 M178.2 349.1 L170.3 345.9 L162.5 344.4 M162.5 344.4 L158 349.7 L153.3 353.6 M153.3 353.6 L152.7 358.5 L152.5 363.2 M183.4 364.8 L183.9 363.9 L183.3 364.8 M184.4 340.5 L180.5 344.6 L178.2 349.1 M162.2 334.9 L161.8 338.8 L162.5 344.4" stroke="#dbdbdb" stroke-width="0.75"/>
<path d="M469.7 294.1 L476.6 296.4 L480.2 297.5 M481.6 281.4 L479.9 282.1 L468.3 287.3 M358 319.2 L344.1 323.5 M351.9 286.1 L346.2 290.6 M351.9 286.1 L355.8 289 L360.7 292.8 M360.7 292.8 L358.7 297.6 L356.4 301 M356 313.6 L357.4 309.7 L358.4 306.5 M358.4 306.5 L358.3 303.4 L356.4 301 M482.4 333.1 L481.2 333.6 L480.8 334 M481.4 302.4 L479.7 305.5 L474.9 313.1 M494.6 338.6 L482.4 333.1 M489.4 320.2 L488.9 322.1 L487.4 322.1 M482.2 273.2 L479.1 271.3 M484.9 241.5 L472.2 253.1 M355 260 L355.3 246.9 M363.4 261 L366.3 252.1 L368.2 243.2 M343.2 251.7 L349.8 262.6 M349.8 262.6 L352 261.7 L355 260 M340.5 276.3 L348 278.4 M351.9 285.9 L349.2 282.3 L348 278.4 M349.8 262.6 L349.3 261.9 L349.5 263.1 M381.3 252.6 L382 257 L381 261.2 M381 261.2 L377.3 262.4 L374.4 264.4 M368.1 264.9 L372.1 264.6 L374.4 264.4 M368.1 264.9 L366.7 271.4 L363.5 276.2 M465 333.7 L468.5 338.5 L472.4 343.2 M471.5 327.6 L470.2 327.7 L467.2 326.8 M392.8 262 L400.6 262 L407.5 263.4 M391.5 262.7 L394.5 269.6 L397.6 275.2 M407.4 263.8 L402.9 269 L397.6 275.2 M381 261.2 L381.5 260.8 L381.8 261.7 M392.8 262 L394.5 258.1 L397.5 252.6 M391.6 242.4 L391.2 243.1 L391.3 243.5 M474.9 313.1 L470 315.2 L464 315.7 M469.7 294.1 L466.1 298.1 L462.1 303.1 M464 315.7 L462.7 309.4 L462.1 303.1 M468.3 287.3 L467.3 286.2 L466.2 284.8 M466.2 284.8 L459.2 286.3 L452.4 289.4 M452.4 289.4 L455.2 293.9 L456.2 300.2 M462.1 303.1 L460 302.6 L456.2 300.2 M447.4 249.9 L447.7 254.4 L448.5 257.6 M447.4 249.9 L445.8 247.7 L443.2 247.5 M431.1 253.9 L431 252.4 L431.7 251.3 M443.2 247.5 L436.9 249.2 L431.7 251.3 M420.9 229.8 L426.8 236.9 M437 225.7 L432.7 234.6 M426.8 236.9 L428.9 236.3 L432.7 234.6 M449.7 280.6 L443.9 280 L438.5 278.1 M437.1 273.7 L438.8 272.2 L440.7 268.9 M440.7 268.9 L443.9 268.7 L445.1 269.6 M441.3 291.3 L445.6 289.2 L449.6 287.7 M441.3 291.3 L438.7 288 L436.9 283.3 M458.2 275.2 L454.9 276.5 L450.4 279.5 M479.2 238.1 L463.9 246.1 M466.3 251.2 L464.9 248.9 L463.9 246.1 M465 262.4 L459.8 264 L454.7 264.4 M453.9 262.6 L455.3 258.2 L458.4 254.7 M467 263.2 L465.5 263 L465 262.4 M466.3 251.2 L464.1 252.7 L463 255.4 M454.3 265.6 L455 264.3 L454.7 264.4 M448.5 257.6 L451.5 259.8 L453.9 262.6 M447.4 249.9 L451 248.3 L454.8 247.8 M463.9 246.1 L461.2 244.7 L458.7 243.8 M468.3 267.1 L471.2 269.2 L474.8 271.5 M468.3 267.1 L464.1 272.1 L459.5 275.7 M474.8 271.5 L471 276.3 L465.8 282.8 M459.5 275.7 L463.2 279 L465.8 282.8 M479.1 271.3 L476.2 271.3 L474.8 271.5 M467 263.2 L468.4 264.9 L468.3 267.1 M458.2 275.2 L458.5 275.5 L459.5 275.7 M452.4 289.4 L451.8 289.5 L449.6 287.7 M349.5 343.6 L357.1 340.5 L364.8 337 M349.5 351.6 L355.3 350.6 L359.8 350.4 M341.4 334.5 L341.7 334.7 M341.7 334.7 L346.4 339.1 L349.5 343.6 M346.3 355.7 L347.5 352.8 L349.5 351.6 M363.4 361.7 L359.3 364.2 L356.1 367.3 M372.1 360.8 L371.9 368.5 L370.3 375.5 M356 368.1 L361.3 372.8 L366.9 376.7 M356 368.1 L355.1 367.7 L356.1 367.3 M366.9 376.7 L368.7 376.3 L370.3 375.5 M346.3 355.7 L350.7 362.3 L356.1 367.3 M359.8 350.4 L361.3 356 L363.4 361.7 M349.1 376.4 L356 368.1 M375.4 385.3 L379.3 377.9 M365.4 381.8 L366.9 376.7 M379.3 377.9 L374.7 376.2 L370.3 375.5 M364.8 337 L365 336.6 L365.2 336.4 M358 319.2 L360.6 322 L361.9 322.9 M382.1 283.2 L379.7 282.6 L376.6 280.6 M382.1 283.2 L382 287.3 L380.4 290 M380.4 290 L375.3 293 L368.6 294.2 M367.9 281.4 L367 287.5 L365.3 291.9 M365.3 291.9 L366.7 293.6 L368.6 294.2 M387.8 280.3 L384.4 281.3 L382.1 283.2 M395.1 297.9 L387.5 295.1 L381.6 292.3 M395.1 297.9 L391.3 288.3 L388.9 280.5 M363.5 276.2 L365.4 277.9 L367.9 281.4 M360.7 292.8 L363.8 292.1 L365.3 291.9 M436.9 283.3 L430.4 283.4 L424.8 285.1 M424.8 285.1 L421.9 284.7 L419.2 282.9 M419.2 282.9 L418.5 283.2 L419.8 281.7 M430.5 273.1 L425.2 277.3 L419.8 281.7 M408.6 286.1 L411.9 284.3 L414.6 283.3 M420.6 303.5 L421.4 302.2 L422.6 301.2 M418.9 283.1 L416.5 284.1 L414.6 283.3 M413.6 247 L413.2 234.2 L413.2 231.7 M409 232.7 L409 232.8 L403.8 241.8 M426.6 243.4 L427.3 240.5 L426.8 236.9 M431.1 253.9 L421.3 254.9 L410 257.6 M409.7 256.7 L410.8 252 L411.1 248.9 M431.7 251.3 L429 248.4 L426.6 243.4 M409.7 256.7 L403.8 254.6 L397.5 252.6 M391.6 242.4 L397.3 241.9 L403.8 241.8 M443.5 243.9 L449.7 236.1 L455.8 230.3 M439.8 236.3 L447.4 227.5 M443.2 247.5 L443.4 244.7 L443.5 243.9 M395.3 390.5 L390.6 396.7 M395.3 390.5 L397.5 390.6 L398.3 390.8 M398.3 390.8 L401.5 400.7 M438.1 395.8 L427.8 402.4 L426.5 403.5 M419.7 270.3 L422.3 266.9 L424.7 264.5 M419.7 270.3 L414 264.9 L409 261.5 M409 261.5 L408.9 259.6 L410 258.6 M419.8 281.7 L420.6 276.1 L419.7 270.3 M419.2 282.9 L420 283 L418.9 283.1 M410 257.6 L410.1 257.3 L410 258.6 M445.3 316.7 L443.1 313.6 L442.9 311.9 M442.9 311.9 L444 309.2 L445.9 308.2 M445.9 308.2 L453.8 312.6 L462.5 316.4 M446.5 302.4 L446.5 304.9 L445.9 308.2 M429 299.9 L431.5 302.5 L434.6 306.1 M429 299.9 L430.9 297.4 L432.6 294.7 M434.6 306.1 L439.2 303.2 L442.7 299.5 M432.6 294.7 L437.2 293.7 L440.4 293.2 M440.4 293.2 L442.3 295.7 L442.7 299.5 M422.6 301.2 L425.6 301.5 L429 299.9 M434.6 311.8 L434.9 309.6 L434.6 306.1 M424.8 285.1 L429.6 289.9 L432.6 294.7 M446.5 302.4 L444.7 300.5 L442.7 299.5 M441.3 291.3 L440.6 292.3 L440.4 293.2 M395.1 297.9 L394.8 298.4 L395.7 298.5 M406.4 291.8 L404.5 294.3 L403.4 295.6 M395.3 390.5 L392.1 386.1 L389.7 383.4 M409.3 384.9 L402.9 387.1 L398.3 390.8 M395.7 377.6 L393.1 380.4 L389.7 383.4 M383.3 391.2 L388.1 383.4 M388.1 383.4 L388.3 384.3 L389.7 383.4 M388.1 383.4 L383.2 380.6 L380.2 377.5 M386 355.9 L380.6 356.8 L375.3 359.5 M376 338.6 L374.7 348.1 L374.1 356.9 M374.7 359.4 L375.9 360.2 L375.3 359.5 M372.1 360.8 L372.4 360.8 L374.7 359.4 M382.2 371.7 L379.1 364.9 L375.3 359.5 M391.3 358.8 L392.1 363.2 L393.4 367.6 M391.3 358.8 L394.7 355.4 L400 353.4 M400 353.4 L402 360.7 L405.1 367.5 M395.8 369.4 L395.6 368 L393.4 367.6 M386 355.9 L387.9 357.1 L391.3 358.8 M407.9 368 L408.7 375.9 L411.3 384.8 M407.9 368 L407.1 367.1 L405.1 367.5 M409.3 384.9 L410.4 384.8 L411.3 384.8 M395.7 377.6 L396.2 372.8 L395.8 369.4 M463.5 381 L460.8 379 M460.8 379 L460.5 376.5 L458.4 373 M468.4 361.5 L466.4 362.2 L461.5 363 M425.8 373.7 L420.5 370.1 L414.3 366.9 M425.8 373.7 L425.7 373.4 L426 373.7 M426 373.7 L428 370.7 L428.8 368.7 M408.7 367.4 L407.6 368 L407.9 368 M408.7 367.4 L411.1 368.1 L414.3 366.9 M411.3 384.8 L410.7 385.8 L411.3 384.9 M411.3 384.9 L418.4 378.5 L425.8 373.7 M434.1 364.4 L438.7 366.5 L443.7 369.2 M434.1 364.4 L430.9 366.7 L428.8 368.7 M443.7 369.2 L443.6 375.3 L443.3 380.7 M426 373.7 L428 375.4 L429.7 378.5 M429.7 378.5 L437.2 379.5 L443.3 380.7 M439.4 390.7 L442 386.8 L443.6 382.3 M443.6 382.3 L444.2 382.3 L443.6 381.4 M443.7 369.2 L445.3 367.9 L446.8 367.5 M434.1 364.4 L433.2 360.8 L433.9 358 M448.8 357.6 L442.8 354.6 L438.3 352.7 M376.8 309.5 L373.2 309.2 L371.5 309.3 M380.4 301.3 L380.2 302.2 L381.8 303.7 M371.5 309.3 L370.9 306.7 L368.5 304.9 M368.5 304.9 L368.3 301.1 L370.1 299 M376.3 321.1 L378.7 318.5 L379.6 314.6 M388.2 305.1 L387.8 310.4 L387.4 315 M388.2 305.1 L384.9 303.6 L381.8 303.7 M381.6 292.3 L380.6 295.9 L380.4 301.3 M368.6 294.2 L369.5 296.1 L370.1 299 M395.7 298.5 L395.2 299.8 L394.1 301.8 M388.2 305.1 L391.5 304.1 L394.1 301.8 M358.4 306.5 L363.5 305.4 L368.5 304.9 M419.1 308 L417.7 310.7 L415.4 311.6 M403.4 295.6 L408.4 303.7 L412 311.6 M415.4 311.6 L414.5 311.7 L412 311.6 M458.9 361.3 L458 356.5 L457.6 352.4 M457.6 352.4 L458.3 350.4 L461 350.2 M448.8 357.6 L450.8 354 L452.5 351.7 M457.6 352.4 L454.9 352.8 L452.5 351.7 M435.4 389.9 L432.1 385.8 L429.2 383.5 M435.4 389.9 L426.7 392.4 L417.9 396.7 M429.7 378.5 L430.3 380.2 L429.2 383.5 M411.3 384.9 L413.8 391.6 L417.9 396.6 M400 353.4 L399.5 352.4 L400.7 352.3 M409.9 361.1 L406.3 356.3 L404.7 351.5 M389 334.4 L389.7 334.3 L389.2 334.1 M387.4 315 L390.2 317.1 L391.3 320.3 M391.3 320.3 L390.9 327.7 L389.7 333.7 M394.1 301.8 L397.2 308.4 L400.3 313.4 M391.3 320.3 L396 316.9 L400.3 313.4 M412 311.6 L410.2 312.8 L407.1 314.5 M400.3 313.4 L403.3 313.4 L407.1 314.5 M448.7 344 L453 342.7 L458.8 343 M448.7 344 L448.5 344.1 L448 343.5 M448 343.5 L448.2 339.5 L450 333.7 M463.7 334.4 L462.2 338.2 L458.8 343 M452.5 351.7 L451.6 347.1 L448.7 344 M438.3 352.7 L437.9 348.6 L439.4 345.7 M439.4 345.7 L443.7 344.1 L448 343.5 M447.2 329.3 L449.4 330.8 L450 333.7 M433.9 312.5 L433 319.5 L431.6 324.6 M415.4 311.6 L418.6 316 L421.3 321.8 M421.3 321.8 L426.5 322.4 L431.6 324.6 M437.1 343.4 L439.9 336.6 L443.2 328 M437.1 343.4 L431.7 340.5 L427.9 339.1 M427.9 339.1 L430.3 331 L431.6 324.6 M439.4 345.7 L437.9 344.8 L437.1 343.4 M447.2 329.3 L444.7 329.3 L443.2 328 M445.3 316.7 L443.4 321.7 L441.1 326.3 M431.6 324.6 L432.2 324.3 L431.6 324.6 M416.7 327 L412.3 328.2 L405.8 327.9 M389.7 333.7 L396.1 333.8 L401.7 332.8 M405.8 327.9 L403.7 330.9 L401.7 332.8 M404.7 351.5 L405.3 350.9 L407 349.8 M401.7 332.8 L403.4 333.1 L403.9 334.8 M407 349.8 L405.5 342 L403.9 334.8 M413.2 349.2 L415.7 344.3 L416.7 339.7 M413.2 349.2 L414.9 351.4 L417.7 353.9 M419.8 354.7 L418 354 L417.7 353.9 M419.1 338.6 L418.9 338.9 L416.7 339.7 M409.9 361.1 L414 356.5 L417.7 353.9" stroke="#dbdbdb" stroke-width="0.7"/>
<path d="M145.1 406.2 L153.9 414 M145.1 406.2 L144.3 407.2 L144.4 406.5 M144.4 406.5 L143.2 414 M144.4 406.5 L139.2 406.3 L132.1 404.5 M163.5 406.1 L165.3 411.3 M167.3 361.9 L165.5 366.1 M165.5 366.1 L165.7 366.5 L165.5 366.1 M165.5 366.1 L160.3 366.2 L156.2 367.8 M149 363.3 L152.8 365.8 L156.2 367.8 M141.8 393.4 L145.5 390.2 L149.5 386.7 M141.8 393.4 L145.2 398.2 L148.5 401.4 M157.1 399.8 L156.4 397.2 L156.9 393.7 M156.9 393.7 L152.7 390 L149.5 386.7 M100.1 365 L104.8 370.8 M137.7 393.3 L134.6 395.7 L132.5 396.3 M114.7 380.7 L113.5 382.2 L112.8 385 M114.7 380.7 L113 378 L110 374.4 M110 374.4 L106.1 380.6 L101.8 384.8 M114.7 380.7 L117.5 378.9 L121.1 376.7 M109.9 371.6 L112.1 369.6 L113.4 368.8 M121.1 376.7 L117.5 372.3 L113.4 368.8 M112.1 361.8 L114.2 365.7 M113.4 368.8 L114.5 366.5 L114.2 365.7 M165.5 366.1 L163.6 372.4 L162 379.5 M156.2 367.8 L150.5 373.3 L146.7 377.6 M149.4 381 L156.2 380.4 L161.9 379.6 M162 379.5 L161.8 378.6 L161.9 379.6 M156.9 393.7 L158.7 392 L162.3 388.7 M149.4 381 L150.3 384 L149.5 386.7 M161.9 379.6 L162.8 384.3 L162.3 388.7 M166.3 401.9 L170.8 397.7 L176.7 394.9 M166.3 401.9 L167.1 397 L168.8 390.5 M176.7 394.9 L173.6 393.3 L169.3 390.2 M162.3 388.7 L166.1 390.3 L168.8 390.5 M162 379.5 L167.3 381.7 L173 383.4 M173 383.4 L170.5 387.7 L169.3 390.2 M176.7 394.9 L179.1 395.7 L180.2 395 M126.2 385.1 L127.7 380.6 L127.8 377.1 M121.1 376.7 L125.2 377.6 L127.8 377.1 M130.2 400.9 L127.4 400.4 L123.4 400.9 M123.4 400.9 L120.7 398 L118.7 393.6 M118.7 393.6 L117.1 392.5 L115 391.8 M124.7 358.6 L124.5 360.2 M114.2 365.7 L117.7 364.6 L119.4 365.1 M127.8 377.1 L129.7 375.9 L129.7 375.6 M119.4 365.1 L123.8 370.2 L129.7 375.6 M174.3 382.8 L175.2 380 L175.5 377.2 M177.5 384.9 L182.9 383.5 M175.5 377.2 L180.3 375.4 M100 385.8 L103.4 389.9 L105.5 394 M115 391.8 L112.2 394 L110.1 396 M123.4 400.9 L117.9 404.6 L112.7 407.9 M112.5 414 L112.6 408 M129.7 367.3 L133.6 363 L137.5 357.1 M129.9 375.5 L134.2 375.2 L137.4 376.2 M137.5 357.1 L138.7 364.1 L141.5 371 M137.4 376.2 L139.3 375.3 L140.7 375.1 M141.5 371 L141.8 373.6 L140.7 375.1 M124.5 360.2 L127.4 363.2 L129.7 367.3 M137.7 355.2 L137.5 357.1 M137.7 393.3 L138.2 383.9 L137.4 376.2 M149 363.3 L145.1 367.5 L141.5 371" stroke="#dbdbdb" stroke-width="0.7"/>
<path d="M395 60 L410 62 L425 70 L436 77.5 M400 30 L415 28 L425 25 M416 45 L430 50 L451 55 M443.8 108 L455 110 L466 115 M395 125 L398 140 L395 155 L400 170 L412 175 M420 132.5 L422 150 L430 165 L440 182.5 M370 150 L385 152 L398 140 M360 200 L375 205 L390 210 L405 212 L421.2 217.5 M440 182.5 L455 195 L470 200 L485 205 L495 202.5 M421.2 217.5 L440 220 L460 218 L475 225 L485 240 M445 245 L460 248 L470 255 L480 255 M365 263.8 L362 250 L365 238 L375 228 L390 222 L405 212 M385 262.5 L388 280 L392 295 L395 297.5 M345 270 L348 285 L352 300 L360 322 M375 295 L372 310 L372 325 L378 338 M430 267.5 L435 285 L440 297.5 M450 263.8 L455 280 L460 282.5 M465 262.5 L472 275 L478 285 M440 297.5 L455 305 L470 315 L480 332 M430 315 L445 320 L455 325 M455 340 L470 345 L480 346 M440 362 L450 375 L455 390 L452 400 M425 368 L440 362 M378 338 L380 350 L385 360 L392 370 M355 343 L352 352 L350 365 L355 375 M340 382 L345 372 L352 365 M325 392 L335 390 L349 392 M100 248.5 L115 241 L130 236 M87.5 288.5 L100 290 L112 288 L125 285 L137.5 280 L145 273.5 M82.5 301 L95 305 L110 308 L125 312 L140 312 L146 310 M77.5 324 L90 330 L105 335 L120 345 L137.5 355 L147.5 355 M100 392.5 L110 395 L120 395 M175 345 L190 350 L200 345 M165 362 L175 368 L180 372.5 M190 410 L200 405 L212 400 L225 398 M30 363.8 L32 375 L40 385 L47 395 M150 231 L152 245 L150 258 L145 273.5 M160 291 L172 295 L180 303.5 M135 197 L140 200 L150 195 L156 190 M130 160 L140 158 L150 152 L160 147 L172 140 L180 136" stroke="#d6d6d6" stroke-width="0.8"/>
<path d="M515 0 L510 15 L507.5 27.5 L506 42.5 L502.5 53.8 L490 65 L482.5 77.5 L477.5 92.5 L470 100 L466 115 L462.5 130 L457.5 142.5 L456 152.5 L457.5 162.5 L450 172.5 L440 182.5 L432.5 190 L425 205 L421.2 217.5 L422.5 232.5 L420 247.5 L415 262.5 L410 275 L405 290 L405 305 L410 325 L412.5 338 M460 0 L461 12.5 L457.5 27.5 L453.8 42.5 L451 55 L443.8 67.5 L436 77.5 L435 87.5 L440 100 L443.8 108 L447 120 L457.5 142.5 M457.5 27.5 L472.5 30 L490 35 L506 42.5 L520 45 M451 55 L465 50 L480 57.5 L495 58.8 L507.5 50 M425 25 L440 27.5 L453.8 42.5 M520 32.5 L512.5 47.5 L509 65 L508 85 L510 100 L515 100 L516 115 L515 132.5 L513.8 150 L512.5 165 L508.8 180 L502.5 192.5 L495 202.5 L490 215 L490 222.5 L485 240 L480 255 L470 270 L460 282.5 L450 295 L440 305 L430 315 L420 327 L415 335 M352 118 L365 120 L385 120 L395 125 L407.5 130 L420 132.5 L430 131 L445 135 L457.5 142.5 L470 143.8 L480 150 L487.5 162.5 L500 175 L510 185 M457.5 162.5 L470 160 L480 165 L487.5 180 L500 192.5 M335 262 L350 265 L365 263.8 L385 262.5 L400 257.5 L415 262.5 L432.5 265 L450 263.8 L465 262.5 L480 257.5 M350 272.5 L370 270 L390 267.5 L410 270 L430 267.5 L455 265 M422.5 232.5 L425 252.5 L422.5 272.5 L420 290 L415 310 L413 330 M398 338 L392 325 L387.5 315 L375 295 L360 280 L345 270 L338 262 L333 250 L330 238 L326 225 L322 214 M338 262 L325 262 L312 262 L303 262 M352 352 L355 335 L360 322 L367.5 312.5 L380 302.5 L395 297.5 L415 300 L430 307.5 L442.5 312.5 L452 325 L455 340 L448 352 L440 362 M420 338 L435 333 L450 328 L465 328 L480 332 L495 335 M400 340 L385 342 L370 343 L355 343 L347 347 M400 345 L385 355 L370 365 L355 375 L340 382 L325 392 L312 400 L300 403 L290 408 M412 362 L425 368 L432 378 L435 392 L432 405 M433 352 L445 358 L455 368 L460 380 M110 412.5 L105 405 L100 392.5 L95 382.5 L85 375 L75 362.5 L72.5 352.5 L72.5 340 L75 325 L77.5 310 L80 316 L82.5 301 L87.5 288.5 L97.5 278.5 L110 268.5 L125 248.5 L130 236 L150 231 L167.5 226 L182.5 228.5 L190 221 L200 205 L212 199 M135 231 L137 215 L140 200 L143 188 L147 168 L158 155 L170 145 M50 412 L60 405 L75 395 L90 382 L95 382.5 L112.5 380 L130 375 L147.5 370 L165 375 L180 372.5 L195 367.5 L207.5 362.5 M132.5 236 L137.5 256 L145 273.5 L152.5 283.5 L160 291 L155 303.5 L146 310 L147.5 325 L148.8 340 L147.5 355 L143.8 367.5 L137.5 375 M172.5 228.5 L175 248.5 L170 266 L175 286 L180 303.5 L182.5 324 L175 345 L165 362 M145 273.5 L165 276 L182.5 281 L205 283.5 M117.5 380 L125 367.5 L140 361 L155 363.8 L165 375 L167.5 390 L162.5 405 L160 413 M137.5 375 L152.5 382.5 L165 392.5 L177.5 402.5 L190 410 M130 375 L133 390 L138 400 L140 412 M120 395 L135 397 L150 398 L165 392.5 M0 368.8 L15 366 L30 363.8 L45 361 L60 356 L72.5 352.5 M72.5 352.5 L67.5 367.5 L62.5 382.5 L55 395 L50 410 M0 392 L15 395 L30 400 L45 408 L50 412" stroke="#cecece" stroke-width="1.1"/>
<path d="M476 10 L478.8 22.5 L475 35 L470 47.5 L467.5 60 L465 72.5 L452.5 80 L451 95 L450 108 M452.5 80 L472.5 82.5 L490 95 L500 102.5 L507.5 100 M476 10 L470 0 M416 45 L425 48 L435 40 L445 35 L455 30 L465 20 L476 10 M397 100 L410 98 L425 95 L440 92 L452.5 80 M357 198 L372.5 197.5 L382.5 193.8 L397.5 182.5 L412.5 175 L427.5 177.5 L440 182.5 L452.5 187.5 L470 190 L482.5 197.5 L495 202.5 M448.8 197.5 L450 212.5 L446 227.5 L447.5 242.5 L445 257.5 L435 262.5 L425 265 L415 268 L405 275 M357 198 L362 205 L365 210 L367.5 222.5 L366 235 L375 240 L373.8 255 L370 262.5 L385 270 L395 278 L405 275 M405 275 L412 285 L425 290 L440 292 L452 298 L462 310 L475 320 L490 330 L500 336 M395 278 L385 285 L372 290 L360 295 L348 297 L335 300 M310 222 L318 232 L320 245 L310 255 L305 262 M335 300 L330 310 L333 320 M335 336 L345 332 L355 328 L365 330 L375 335 L390 333 L400 338 L408 340 M345 345 L355 350 L365 350 L375 352 L385 355 L395 358 L403 360 M345 358 L340 370 L335 380 L333 392 L325 400 L318 405 M137.5 221 L135 241 L132.5 258.5 L137.5 266 M137.5 266 L150 268.5 L160 261 L167.5 254.8 L182.5 256 L195 253.5 L210 263.5 M132.5 258.5 L135 276 L130 291 L127.5 303.5 L132.5 316 L140 322 L142.5 310 M90 276 L100 288.5 L112.5 291 L122.5 296 L130 291 M55 360 L67.5 355 L75 340 L87.5 340 L92.5 332.5 L107.5 330 L125 327.5 L137.5 320 L140 322 M87.5 340 L95 352.5 L100 367.5 L102.5 382.5 L100 392.5 L105 400 L112 405 L115 397.5 M15 368.8 L30 371 L42.5 377.5 L47.5 390 L50 402.5 L48 412 M115 397.5 L135 392.5 L160 385 L175 377.5 L190 372.5 L200 382.5 L205 387.5 M115 397.5 L118 405 L125 412 M205 395 L200 402 L195 410 M226 396 L228 405 L225 412 M256 378 L262 385 L270 384 M286 398 L290 404 L296 406 M197 198.8 L200 208 L208 215 L215 220 L222.5 222" stroke="#bfbfbf" stroke-width="0.65" stroke-dasharray="0.6 1.6"/>
</g>
<path d="M154.9 171.1 L150.7 170 L145.6 168.5 L143.5 172.6 L143 175.7 L141.4 180.9 L142.4 184.6 L146.6 184 L150.7 185.1 L152.3 186.6 L155.4 184 L157.8 184 L161 184.5 L161 170 L156.5 169.5Z" fill="#bdbdbd"/>
<path d="M407.3 347 L414.6 343.3 L422.9 342.4 L430.3 345.1 L434 350.7 L434.4 356.2 L430.3 361.7 L424.8 365.4 L420.2 368.2 L418.3 372.8 L416.5 377.4 L411.9 379.2 L410 382.9 L412.8 384.8 L411.9 390.3 L410.9 395.8 L410.9 401.4 L410 406 L409.5 434 L395 434 L395.3 406 L396.2 401.4 L398 396.8 L399.9 393.1 L399.9 389.4 L395.3 388.5 L393.4 384.8 L390.7 378.3 L389.7 373.7 L392.5 370.9 L397.1 369.1 L399 365.4 L402.6 362.6 L405.4 359 L406.3 353.4 L405.4 349.7Z" fill="#bdbdbd"/>
<path d="M342 434 L342.6 412 L344.8 402.5 L349 393.8 L356.7 387.3 L365.3 384.1 L374 383.4 L382.7 385.2 L389.2 390.6 L391.8 398.2 L391.3 406.8 L390.5 434Z" fill="#bdbdbd"/>
<path d="M292 434 L292.8 412.3 L296 406.8 L302.5 403.6 L309 402.5 L316.6 404.7 L320.9 409 L322 412.3 L322 434Z" fill="#bdbdbd"/>
<path d="M77.3 361.9 L79.4 363.3 L80.1 368.1 L81.5 372.3 L84.9 375.7 L87 379.2 L86.3 383.3 L83.5 386.8 L80.1 389.6 L75.9 391.6 L71.8 393.7 L68.3 395.8 L65.6 398.5 L62.8 401.3 L60.7 403.4 L58 404.8 L55.9 407.5 L54.5 411 L53.1 412.6 L51.8 410.3 L53.1 406.2 L54.5 402 L55.9 397.9 L58 394.4 L60.7 391.6 L64.2 388.2 L67 384.7 L67.7 381.3 L65.6 377.1 L65.6 373 L67.7 368.8 L71.8 366.8 L75.3 366.1 L76.2 363.3Z" fill="#bdbdbd"/>
<path d="M445.9 298.1 L448.5 297.6 L454.7 299.2 L459.9 298.1 L461.4 296.6 L459.9 294 L457.3 291.4 L457.8 289.8 L460.9 290.9 L462.5 294 L464.5 298.1 L466.6 302.3 L469.2 306.4 L471.8 310 L470.8 311.1 L467.1 309 L463 308 L459.4 307.5 L458.3 304.9 L455.2 302.3 L450.5 301.8 L446.9 300.2Z" fill="#bdbdbd"/>
<path d="M475.5 299.5 L477 301.8 L478.5 304.9 L480.3 307.7 L478.8 307.7 L476.8 305.4 L475.7 302.8Z" fill="#bdbdbd"/>
<path d="M431.5 130.9 L434.8 130.5 L437.2 132.9 L439.2 136.1 L439.6 140.2 L438.4 143.8 L436 145.8 L434 145 L431.9 141.8 L429.9 138.5 L429.5 135.3 L430.3 132.5Z" fill="#bdbdbd"/>
<path d="M469 275.5 L471.5 273.6 L475 272.6 L475.5 273.6 L472.5 275 L470 277Z" fill="#bdbdbd"/>
<path d="M145 177.3 L147.6 176.3 L152.3 175.7 L155.4 175.2 L157.5 176.3 L157 179.4 L153.3 180.4 L150.2 181.4 L148.2 183 L145.6 180.4Z" fill="#e6e6e6"/>
<path d="M332.8 388.4 L337.2 386.9 L341.5 389.5 L342.6 393.8 L339.3 397.7 L335 396 L332.4 391.7Z" fill="#d8d8d8"/>
<g fill="none" stroke-linejoin="round" stroke-linecap="round">
<path d="M225 218.8 L230 213.8 L233.8 205 L240 203.8 L245 207.5 L247.5 213.8 L252.5 211.2 L262.5 207.5 L270 206.2 L276.2 198.8 L280 195 L290 191.2 L300 188.8 L305 187.5 L307.5 192.5 L308.8 200 L305 207.5 L306.2 217.5 L306.2 222.5 L302.5 232.5 L285 241.2 L281.2 247.5 L283.8 257.5 L292.5 260 L302.5 261.2 L303.8 270 L300 277.5 L301.2 287.5 L302.5 292.5 L305 302.5 L297.5 308.8 L287.5 311.2 L278.8 312.5 L270 317.5 L263.8 323.8 L262.5 333.8 L263.8 343.8 L262.6 351 L260.2 356 L258 360.8 L257.7 367.3 L256.1 372 L257.7 377 L255.3 379.4 L251.3 381.8 L246.5 384.2 L240 387.4 L233.8 390 L226.2 395.5 L217.5 393.8 L207.5 396.2 L203.8 392.5 L205 383.8 L208.8 372.5 L207.5 361.2 L201.2 353.8 L197.5 345 L192.5 336.2 L187.5 330 L183 326.2 L183.8 321.2 L191.2 317.5 L197.5 312.5 L203.8 306.2 L207.5 300 L206.2 290 L205 283 L206.2 280 L208.8 272.5 L213.8 265 L217.5 257.5 L216.2 248.8 L220 243.8 L221.2 235 L222.5 225Z" fill="#cfcfcf"/>
<path d="M220.8 237.8 L225.8 239.2 M225.8 239.2 L227 236.5 L229.9 233.5 M222 228.8 L229.9 233.5 M225.8 239.2 L226.1 240.6 L227.1 242.5 M217.3 247.4 L224.7 247.4 M227.1 242.5 L224.9 245 L224.7 247.4 M216.9 258.7 L221.5 260 M224.7 247.4 L226 248.3 L227 250.2 M227 250.2 L227.4 251.5 L227.2 254.7 M221.5 260 L224.8 257 L227.2 254.7 M289.6 259.2 L287.2 263.8 M297.9 260.7 L297.6 262.2 L296.6 276.1 M287.2 263.8 L288.5 266.6 L288.4 269.8 M288.4 269.8 L292.1 273.4 L295.7 275.8 M295.7 275.8 L297.1 275.5 L296.6 276.1 M300.1 277.9 L297.5 276.9 M297.5 276.9 L296.5 276.5 L296.6 276.1 M277.5 272.1 L276.6 272.8 L276.8 274.9 M277.5 272.1 L282.9 271.2 L288.4 269.8 M276.8 274.9 L280.2 278.9 L283.1 281.1 M283.1 281.1 L288.7 278.5 L295.7 275.8 M298.3 189.2 L287.5 207.2 M287.5 207.2 L277.8 197.2 M307.8 194 L295.7 208.9 M306.1 216.7 L302.3 214 L295.7 208.9 M287.5 207.2 L287.8 209.5 L288.5 210 M295.7 208.9 L291.7 209.2 L288.5 210 M245.1 261.1 L248.8 265.8 L253.8 269.1 M245.1 261.1 L244.2 261.8 L244.6 261 M244.6 261 L243.5 269.2 L243.1 277.1 M243.1 277.1 L248.7 275.8 L252.7 275.4 M253.8 269.1 L253.3 272.5 L252.7 275.4 M221.5 260 L224.3 264.2 L226.8 268.7 M227.2 254.7 L231.3 255.8 L234.7 257.6 M234.7 257.6 L230.1 262.2 L226.8 268.7 M229.6 393 L226.9 388.7 M226.9 388.7 L223.7 388.7 L219.9 390 M217.2 393.8 L219.9 390 M227.1 242.5 L230.6 242.5 L235.9 242.6 M227 250.2 L232.7 249.8 L236.6 247.5 M235.9 242.6 L236.1 244.6 L236.6 247.5 M229.9 233.5 L232.5 232.9 L233.5 233.2 M233.5 233.2 L234.3 236 L237.1 239.8 M235.9 242.6 L236.4 241.5 L237.1 239.8 M240.9 256.2 L237 256.6 L234.7 257.6 M240.9 256.2 L241.6 254.6 L241.3 253.7 M236.6 247.5 L238.3 251 L241.3 253.7 M224.1 221.1 L230.6 222.8 M233.5 233.2 L234.4 231.9 L235.5 229.5 M230.6 222.8 L233 227.1 L235.5 229.5 M234.4 204.9 L239.7 216.6 M230.6 222.8 L235.1 219.9 L239.7 216.6 M277.5 272.1 L273.2 266.2 L269.3 261.9 M276.8 274.9 L274.8 278.6 L271.3 281.1 M264.5 273.8 L268.4 278.2 L271.3 281.1 M264.5 273.8 L266.1 269.2 L267.6 262.7 M269.3 261.9 L268.4 263.3 L267.6 262.7 M287.2 263.8 L279.4 260.9 L273.3 258.6 M273.3 258.6 L271.8 260.4 L270 260.9 M269.3 261.9 L269.7 262 L270 260.9 M264.5 273.8 L260.2 276.3 L256.4 278 M256.4 278 L255.2 276.9 L252.7 275.4 M253.8 269.1 L256.9 265.8 L262 261.9 M267.6 262.7 L263.8 261.9 L262 261.9 M245.1 261.1 L250.3 260.1 L257.1 257.9 M262 261.9 L258.9 260.4 L257.1 257.9 M300.5 221.7 L292.9 217 L287 213.4 M300.5 221.7 L297.3 225.7 L293.3 227.9 M293.3 227.9 L290.4 226.5 L289.1 224.7 M289.1 224.7 L287.6 219.6 L286.4 214.1 M286.4 214.1 L285.9 212.8 L287 213.4 M306.2 221 L304.6 221.5 L300.5 221.7 M288.5 210 L287.7 211.9 L287 213.4 M297.4 235.1 L293.4 230.3 M293.4 230.3 L294.2 228.5 L293.3 227.9 M293.4 230.3 L291 233 L287.5 234.4 M287.5 234.4 L284.7 232.1 L279.9 229.5 M279.9 229.5 L284.8 226.8 L289.1 224.7 M270 206.2 L275.2 217.8 M275.2 217.8 L281.8 216.5 L286.4 214.1 M272.8 245.6 L273.3 249.6 L275.5 254.9 M272.8 245.6 L273 244.4 L273.7 243.7 M273.7 243.7 L277.3 241.9 L279.9 241.1 M275.5 254.9 L282.3 251.6 M279.9 241.1 L283 242.9 L283.9 243.1 M273.3 258.6 L273.6 257.5 L275.5 254.9 M270 260.9 L266.6 253.2 L262.6 245.7 M262.6 245.7 L266.9 245.9 L272.8 245.6 M262.7 240.3 L263.1 242.6 L262.4 245.5 M262.7 240.3 L267 239.2 L270.4 238 M270.4 238 L271.3 241.6 L273.7 243.7 M262.4 245.5 L262.1 245.6 L262.6 245.7 M287.5 234.4 L287.9 239 L287.7 239.9 M232.3 277.9 L231.9 275.5 L230.1 274.5 M232.3 277.9 L224.7 283.4 L217 289.2 M230.1 274.5 L229.5 273.8 L227.4 272.2 M227.4 272.2 L223.5 273.5 L218.9 273.6 M218.9 273.6 L216 279.3 L213.7 285.2 M213.7 285.2 L214.5 286.9 L217 289.2 M240.9 256.2 L241.1 258.2 L242.5 259.3 M242.5 259.3 L235.6 267.7 L230.1 274.5 M226.8 268.7 L227.3 270.4 L227.4 272.2 M210.6 269.8 L218.9 273.6 M205.4 282.1 L213.7 285.2 M197.3 316.7 L194.3 320.5 L191.6 325.2 M197.3 316.7 L200.6 318.2 L204.4 320.6 M204.4 320.6 L205.8 320.6 L205.8 322.4 M205.8 322.4 L201.4 327.3 L197.6 331.9 M191.6 325.2 L191.8 327.3 L192 330.1 M192 330.1 L194.7 330.1 L197.6 331.9 M183.7 321.6 L191.6 325.2 M195.6 314 L197.3 316.7 M212.9 302.2 L208.2 311.5 L204.4 320.6 M212.9 302.2 L206.7 301.4 M189.2 332.2 L192 330.1 M197.9 346 L203.2 342.9 M203.2 342.9 L200.1 337.3 L197.6 331.9 M211.6 395.2 L211.7 392.7 L210.5 383.6 M206.2 380.3 L210.5 383.6 M219.9 390 L218.5 387 L216.4 383.1 M210.5 383.6 L212.6 382.4 L216.4 383.1 M227.1 388 L225.3 383 L221.5 378.7 M227.1 388 L229.9 383.8 L234.6 379.8 M221.5 378.7 L225.7 377.6 L231.5 375.3 M234.6 379.8 L233.5 377.9 L232.4 375.6 M232.4 375.6 L232.8 374.7 L231.5 375.3 M226.9 388.7 L226.4 388.9 L227.1 388 M216.4 383.1 L218.4 380.5 L220.1 378.3 M220.1 378.3 L220.5 378.7 L221.5 378.7 M244 385.4 L242.8 383.5 M242.8 383.5 L239.5 382.6 L234.6 379.8 M244.6 261 L242.8 259.2 L242.5 259.3 M241.3 253.7 L244.1 251.6 L245.6 250.4 M257.1 257.9 L256.2 253.8 L255.3 249.9 M245.6 250.4 L251.4 250 L255.3 249.9 M262.4 245.5 L258.7 246.2 L256.4 248.1 M255.3 249.9 L256.7 249.6 L256.4 248.1 M259.7 234.7 L254.7 238.1 L251.2 239.8 M259.7 234.7 L260.9 237.9 L262.7 240.3 M256.4 248.1 L254 244.7 L251.2 239.8 M246.7 228.4 L244.1 232.7 L241.6 238.9 M246.7 228.4 L249 234.8 L251.1 239.8 M241.6 238.9 L243.9 241 L246.6 241.7 M251.1 239.8 L248.7 240.4 L246.6 241.7 M237.1 239.8 L239 238.8 L241.6 238.9 M245.6 250.4 L246.1 247 L246.6 241.7 M251.2 239.8 L251.3 240.3 L251.1 239.8 M246.8 227.1 L245.6 225.9 L245.7 225.2 M246.8 227.1 L253.5 229.4 L259.9 232.2 M245.7 225.2 L244.9 224.3 L246.1 222.1 M246.1 222.1 L249.9 219 L255.2 215.3 M255.2 215.3 L256.9 215.4 L256.7 216.5 M256.7 216.5 L258.3 223.5 L260.8 231.3 M259.9 232.2 L260.4 232.7 L260.8 231.3 M235.5 229.5 L239.9 226.8 L245.7 225.2 M246.7 228.4 L247.5 227.3 L246.8 227.1 M259.7 234.7 L260.1 233.9 L259.9 232.2 M239.7 216.6 L241.9 218.4 L246.1 222.1 M256 209.9 L255.2 215.3 M274 220.1 L272.8 220.7 L270.8 221.3 M274 220.1 L275.7 224.8 L279 229.4 M270.8 221.3 L267.2 225 L265.2 229.4 M265.2 229.4 L267.4 232.3 L271.5 235.1 M271.5 235.1 L274.4 233.5 L277.4 232.7 M279 229.4 L277.7 230.2 L277.4 232.7 M275.2 217.8 L273.7 218.2 L274 220.1 M256.7 216.5 L264.7 218 L270.8 221.3 M279.9 229.5 L279.9 229.4 L279 229.4 M260.8 231.3 L263.1 230 L265.2 229.4 M270.4 238 L271.9 237.2 L271.5 235.1 M279.9 241.1 L278.5 236.8 L277.4 232.7 M220.1 378.3 L219.2 375.2 L216.7 371.6 M208.6 371 L216.7 371.6 M231.5 375.3 L227.2 369.8 L222.5 366 M216.7 371.6 L219.1 368.5 L222.5 366 M239.7 363.5 L235.5 368.7 L232.4 375.6 M239.7 363.5 L231.8 363.8 L222.9 364.5 M222.9 364.5 L223.2 365 L222.5 366 M256.4 278 L257.9 279.9 L257.6 282.8 M271.3 281.1 L271.2 281.9 L271.1 283 M257.6 282.8 L263.9 282.9 L269 284.6 M271.1 283 L270.2 283.7 L269 284.6 M257.6 282.8 L257.1 284.5 L256.1 287.3 M256.1 287.3 L261.1 291.7 L265.9 294.2 M269 284.6 L266.6 290.3 L265.9 294.2 M252.4 290.1 L252.6 292.8 L251 295.8 M252.4 290.1 L245 285 L239.2 279.9 M251 295.8 L248.2 295 L243.6 296.3 M243.6 296.3 L241.8 288.7 L238.9 280 M239.2 279.9 L238.3 280.2 L238.9 280 M243.1 277.1 L240.5 277.7 L239.2 279.9 M256.1 287.3 L254.3 288.3 L252.4 290.1 M232.3 277.9 L234.1 279 L235.2 279.9 M235.2 279.9 L236.5 280.8 L238.9 280 M242.8 383.5 L245.1 374.8 L248.3 364.6 M248.3 364.6 L257.7 367.4 M213.1 358.2 L211.5 360.2 L208.4 360.3 M213.1 358.2 L213.7 351.6 L213.9 343.3 M208.4 360.3 L207.3 351.9 L204.7 342.9 M213.9 343.3 L210.6 342.8 L208 341.9 M204.7 342.9 L206 343 L208 341.9 M207.5 361.5 L208.4 360.3 M221.6 359.5 L223.1 362.5 L222.9 364.5 M221.6 359.5 L216.8 358.5 L213.1 358.2 M203.2 342.9 L203.1 342.6 L204.7 342.9 M205.8 322.4 L207.4 323 L210.3 324.3 M210.3 324.3 L209.7 332.4 L208 341.9 M283.1 281.1 L283.2 283.5 L281.8 284.1 M271.1 283 L273.7 283.8 L275.2 285.7 M281.8 284.1 L278.1 284.8 L275.2 285.7 M217.6 342.9 L218.5 335.8 L218.9 326.9 M217.6 342.9 L214.8 342.3 L213.9 343.3 M210.3 324.3 L213.6 322.8 L215.6 323.2 M218.9 326.9 L219.4 325.7 L218.3 325.7 M215.6 323.2 L217.9 324.4 L218.3 325.7 M212.9 302.2 L214 302.8 L214.6 302 M219.1 315.8 L218 319.3 L215.6 323.2 M219.1 315.8 L218.2 310.9 L217.4 304.9 M214.6 302 L215.5 303.1 L217.4 304.9 M217 289.2 L218 292.7 L217.6 294.7 M214.6 302 L216.8 298.1 L217.6 294.7 M235.2 279.9 L233.2 285.7 L231.7 293.1 M217.6 294.7 L225.3 293 L231.7 293.1 M221.6 359.5 L221.7 357.2 L223 356.7 M217.6 342.9 L219.1 344.4 L220.8 343.8 M220.8 343.8 L221.1 349.8 L223 356.7 M239.7 363.5 L240.6 362.9 L242.4 361.5 M223 356.7 L229 354.9 L235.6 354.4 M235.6 354.4 L236.4 355.3 L236.4 354.6 M236.4 354.6 L238.7 357.2 L242.4 361.5 M248.3 364.6 L246.5 364 L245.1 361.7 M242.4 361.5 L242.9 360.9 L245.1 361.7 M218.9 326.9 L223.1 330.3 L226.8 332.6 M220.8 343.8 L222.4 342.3 L224.2 342.7 M226.8 332.6 L225.6 336.8 L224.2 342.7 M235.6 354.4 L230 347.8 L226.1 343 M224.2 342.7 L226 342.1 L226.1 343 M297.5 276.9 L292.8 284 L288.2 289.8 M281.8 284.1 L283 286.5 L285.4 289.4 M288.2 289.8 L287.4 289.7 L285.4 289.4 M302.3 291.6 L292.1 298 M288.2 289.8 L291.1 294.5 L292.1 298 M261.8 313.6 L262.5 306.8 L261.4 301.8 M261.8 313.6 L259.5 314.4 L259 315.2 M254.6 301 L250.5 306.6 L248.4 310.4 M254.6 301 L257.6 301.5 L261.4 301.8 M248.4 310.4 L254.4 312.6 L259 315.2 M219.1 315.8 L223.8 315.7 L227.4 317 M218.3 325.7 L224.1 325.3 L230.1 323.9 M227.4 317 L228.7 319.9 L230.1 323.9 M217.4 304.9 L224.4 305 L229.9 305.6 M227.4 317 L230.7 314.6 L232.4 312.9 M229.9 305.6 L231.8 308.5 L232.4 312.9 M230.1 323.9 L231.8 325.7 L232.8 325.7 M232.4 312.9 L233.1 312.9 L233.3 313.3 M233.3 313.3 L236.4 319.6 L237.6 324.1 M237.6 324.1 L235.8 324.3 L232.8 325.7 M226.8 332.6 L228.1 331.6 L231.1 330.2 M226.1 343 L231 340.3 L237.3 339.4 M237.3 339.4 L234.3 335.7 L231.1 330.2 M231.1 330.2 L231.5 328.6 L232.8 325.7 M292.1 298 L289.4 302.5 L288.3 308.5 M288.3 308.5 L289.4 310.8 M261.8 313.6 L264.4 314 L268.4 315.7 M263.4 326.7 L256.4 324.5 M259 315.2 L257.9 319.6 L256.4 324.5 M268.4 315.7 L270 317.5 M262.1 352 L254 347.6 M263.1 338.7 L259.3 342 L254 347.6 M277.1 292.5 L278.1 293.8 L279.1 293.8 M277.1 292.5 L270.8 293.9 L266.3 296.3 M279.1 293.8 L279.5 299.6 L281.8 304.5 M281.8 304.5 L276.6 304.8 L272.5 304.3 M272.5 304.3 L269.5 303 L265.6 299.6 M265.6 299.6 L265.3 297.8 L266.3 296.3 M275.2 285.7 L276.7 289 L277.1 292.5 M285.4 289.4 L281.6 291.9 L279.1 293.8 M265.9 294.2 L266.7 295.1 L266.3 296.3 M288.3 308.5 L284.8 305.8 L281.8 304.5 M268.4 315.7 L270.3 310.7 L272.5 304.3 M261.4 301.8 L263.2 301.6 L265.6 299.6 M251 295.8 L252.5 298.4 L254.6 301 M245.3 318.9 L251.3 322.6 L256.2 324.6 M245.3 318.9 L243.5 321.4 L240.3 324.3 M243.6 331.3 L241.9 327.1 L240.3 324.3 M243.6 331.3 L248.9 330.3 L254 328 M254 328 L254.5 326 L256.2 324.6 M248.4 310.4 L246.3 310.8 L245.9 311.5 M245.9 311.5 L245.6 316.1 L245.3 318.9 M256.4 324.5 L256.6 325.4 L256.2 324.6 M245.9 311.5 L245 311.2 L245.3 311.1 M233.3 313.3 L239.7 311.3 L245.3 311.1 M237.6 324.1 L239.1 324.4 L240.3 324.3 M254.7 335.3 L258.4 336 L263 337.6 M254.7 335.3 L254.9 331 L254 328 M234.5 297.9 L234 300.2 L233 302.8 M234.5 297.9 L238.4 298.2 L242.6 297 M233 302.8 L238.1 306.6 L243.7 308.8 M242.6 297 L243.8 303 L243.7 308.8 M231.7 293.1 L232.3 295.2 L234.5 297.9 M229.9 305.6 L232.4 303.7 L233 302.8 M243.6 296.3 L243.3 296.1 L242.6 297 M245.3 311.1 L244.9 310.3 L243.7 308.8 M240.2 339.9 L246.5 344.2 L251.3 348.1 M240.2 339.9 L239.4 340.5 L240.2 339.9 M240.2 339.9 L241.9 338.2 L243.3 334.8 M243.3 334.8 L248 335.5 L252.7 336.9 M252.7 336.9 L252.4 342.4 L252.3 347.6 M251.3 348.1 L252.2 348.2 L252.3 347.6 M236.4 354.6 L239 347.3 L240.2 339.9 M245.1 361.7 L247.6 355.6 L251.3 348.1 M237.3 339.4 L239.1 338.9 L240.2 339.9 M243.6 331.3 L243.4 333.7 L243.3 334.8 M254.7 335.3 L253.8 335.3 L252.7 336.9 M254 347.6 L253.9 348.1 L252.3 347.6" stroke="#c8c8c8" stroke-width="0.5"/>
<path d="M297 309 L285 318 L272 322 L262 315 L250 305 L242 298 L236 290 L232 278 L228 268 L232 255 L240 242 L250 232 L258 225 L262 218 L258 210 L250 208 M242 298 L236 310 L230 325 L225 340 L220 355 L215 370 L212 385 L208 395 M258 225 L270 232 L280 242 L290 255 L303 262 M228 268 L220 262 L214 255 M262 218 L270 212 L278 205 L283 196" stroke="#c2c2c2" stroke-width="0.9"/>
<path d="M384.2 15.5 L398.4 17 L400.8 21 L400.8 32.3 L404.8 36.3 L411.3 37.9 L416.1 43.5 L415.3 48.4 L411.3 52.4 L406.5 54 L400 54.8 L398.4 59.7 L397.6 68.3 L394.3 74.5 L394.3 82.8 L392.2 89 L397.4 100.4 L395.3 104.6 L391.2 110.8 L387 118 L386 124.2 L386.6 131.5 L381.9 133.6 L372.5 135.6 L364.2 138.8 L357 142.9 L353.5 148.5 L355 157 L351.8 165 L353.5 173.6 L356.9 180 L353.5 187 L355 193.7 L357.5 198.7 L353.5 197 L346.8 192 L341.8 190.3 L342 191 L338 195 L334 199 L332 205 L328 211 L322 214 L319 219 L314 222 L309 222 L306.2 217.5 L305 207.5 L308.8 200 L307.5 192.5 L305 187.5 L300 188.8 L290 191.2 L280 195 L276.2 198.8 L270 206.2 L262.5 207.5 L252.5 211.2 L247.5 213.8 L245 207.5 L240 203.8 L233.8 205 L230 213.8 L225 218.8 L222.5 216.2 L220 210 L218.8 202.5 L213.8 196.2 L217.5 193.8 L230 186.5 L238.3 181.5 L246.6 176.6 L251.4 173.9 L257.6 173.2 L267.3 171.5 L271.5 167.6 L277 162.1 L284.6 158 L290.8 152.4 L296.3 145.5 L300 138 L306.2 130.5 L311.4 122.2 L316.6 111.8 L322.8 101.5 L331 93 L341.5 86 L352.5 81 L362.5 74 L370 64 L375 55 L377.5 44 L380 30Z" fill="#dbcbe2"/>
<path d="M400.8 29.3 L395 34.9 M395 34.9 L380.1 29.6 M374 135.3 L368.7 128.5 M354.3 158.7 L351.6 156.9 L341.5 151.7 M368.7 128.5 L356.1 132.3 L342.8 136.1 M341.5 151.7 L342.8 144.4 L342.8 136.1 M395 34.9 L394.3 41.9 L392.5 47.9 M401.2 54.6 L392.5 47.9 M376 50.5 L383.5 53 M392.5 47.9 L387.1 50.7 L383.5 53 M352.9 170.8 L345.6 177.8 M349.5 194 L345.6 177.8 M232.5 207.8 L230.2 194.9 M257.9 209.2 L253.4 193.6 M253.4 193.6 L241.8 193.5 L230.2 194.9 M230.2 194.9 L225 189.4 M333.4 119.5 L332.3 121.9 L333.1 123.2 M333.4 119.5 L316.4 112.2 M333.1 123.2 L327 127.6 L320.9 132.6 M307.8 127.9 L320.9 132.6 M382.6 67.7 L390 73.6 L394.3 79 M382.6 67.7 L372.2 72.8 L360.3 76 M394.3 81.5 L386.5 85.3 L377.4 89.9 M377.4 89.9 L369.6 84.7 L361.1 79.5 M360.3 76 L360.2 78.2 L361.1 79.5 M383.5 53 L382.1 60 L382.6 67.7 M360 75.7 L360.3 76 M393.3 107.6 L377.1 106.5 M377.1 106.5 L376.8 97.2 L377.4 89.9 M354 98.2 L363 103 L373.7 109 M354 98.2 L348.6 102.1 L342 104.8 M341.2 108.8 L355.5 118.7 L368.6 127.7 M341.2 108.8 L342.6 106.4 L342 104.8 M368.6 127.7 L371.5 118.2 L373.7 109 M377.1 106.5 L376.3 107.6 L373.7 109 M361.1 79.5 L358 89.4 L354 98.2 M331.8 92.5 L342 104.8 M368.7 128.5 L368.3 128.4 L368.6 127.7 M333.4 119.5 L337.9 115 L341.2 108.8 M333.1 123.2 L337.4 130.1 L342.8 136.1 M308 195.3 L311 189.1 M307.3 202.8 L324.4 206.7 L329.8 208.2 M311 189.1 L320.4 187.8 L329.2 187.9 M335 198 L329.2 187.9 M345.6 177.8 L339.9 178.3 L333.5 178 M333.5 178 L330.4 183 L329.2 187.9 M270.4 185 L261.5 188.8 L253.8 192.6 M270.4 185 L266.7 171.6 M253.8 192.6 L249.6 174.9 M282.6 194 L282.1 191.6 M282.1 191.6 L275.5 188.9 L270.4 185 M253.4 193.6 L253.4 192.3 L253.8 192.6 M287.3 180.9 L294.4 178.5 L302.2 175.5 M287.3 180.9 L280.7 168.8 L278.1 161.5 M302.2 175.5 L300.7 170.1 L298.9 162.7 M283.4 158.6 L287.1 160 L298.9 162.7 M282.1 191.6 L285.6 186.2 L287.3 180.9 M311 189.1 L308.9 183.9 L308.5 179.3 M308.5 179.3 L306 176.4 L302.2 175.5 M299.1 139.8 L310.8 151.6 M310.8 151.6 L305.7 156.4 L298.9 162.7 M319.3 145.8 L314.9 148.3 L310.9 151.6 M319.3 145.8 L329.5 148.5 L339.4 152.4 M310.9 151.6 L315.7 159.7 L321 168.1 M339.4 152.4 L334.2 159.6 L327.3 168.7 M327.3 168.7 L323.7 167.7 L321 168.1 M320.9 132.6 L320.5 139.7 L319.3 145.8 M310.8 151.6 L309.9 152.1 L310.9 151.6 M341.5 151.7 L341.2 151.9 L339.4 152.4 M308.5 179.3 L314.9 174.3 L321 168.1 M333.5 178 L331.3 172.8 L327.3 168.7" stroke="#cfbdd8" stroke-width="0.55"/>
<path d="M213 199 L225 195 L240 186 L255 180 L270 177 L285 170 L295 162 L305 150 L315 135 L325 120 L335 108 L345 98 L355 92 M355 92 L365 85 L372 75 L378 62 L382 48 L385 32 L388 20 M335 108 L345 112 L352 118 M295 162 L300 170 L304 178 L308 186 M345 98 L350 105 L352 118" stroke="#cdbbd6" stroke-width="0.9"/>
<path d="M352.7 94.2 L358.4 91.8 L364.8 94.2 L367.7 99 L366.5 104.7 L364 107.9 L365.6 111.9 L368.1 118.4 L367.3 124.8 L364.8 130.5 L360 133.2 L355.2 131.3 L351.1 128.9 L348.7 124.8 L344.7 122.4 L340.6 119.2 L339 116 L342.3 112.7 L346.3 109.5 L348.7 106.3 L352.3 104.7 L351.1 100.6Z" fill="#d2d1d2"/>
<path d="M251.4 173.9 L257.6 173.2 L267.3 171.5 L271.5 167.6 L277 162.1 L284.6 158 L289.4 160.7 L292.2 165.6 L292.9 169.7 L294.9 175.2 L293 180 L293.8 187 L292.9 190.4 L285.3 192.5 L278.4 195.3 L275.6 194.6 L271.4 191.1 L269.4 188.4 L268 192.5 L264.5 198 L259 198.5 L255.6 196.6 L253.5 195.3 L252.8 188.4 L252.1 181.4Z" fill="#bfa4dd"/>
<path d="M269.6 171 L269.8 180 L269.4 188.4" stroke="#cbb5e8" stroke-width="0.6"/>
<path d="M257.6 189 L262.5 186.3 L266.6 187 L266.2 191.1 L263.2 194.6 L258.3 194.6 L256.3 192.5Z" fill="#dbcbe2"/>
<path d="M293.8 177.5 L299 175.7 L304.2 172.3 L306.8 168.8 L311.1 168 L317.1 170.5 L320.6 173.1 L325.8 174 L330.1 171.4 L335.3 171.4 L337.9 175.7 L340.5 180.9 L343.6 186.1 L342.2 190.4 L338.7 193.9 L335.3 196.5 L333.5 200.8 L332.7 205.1 L329.2 208.5 L325.8 210.3 L322.3 212.9 L320.6 217.2 L317.1 220.6 L312.8 221.5 L307.6 222.4 L306.8 217.2 L307.6 212 L305.9 207.7 L304.7 203.4 L306.8 200.8 L309.4 198.2 L309.4 193.9 L306.8 188.7 L302.5 187 L297.3 188.2 L293.5 188.7 L293.5 182.6Z" fill="#a67cdc"/>
<path d="M312.7 168.2 L311 176 L309.7 182.5 L307.5 190 L311 195 L317.2 199.7 L313.5 204 L311.2 208 L310 214 L309.7 221 M329.2 171.5 L325.5 177 L322.5 182.5 L319.5 188.5 L317.2 194.5 L317.2 199.7 L324 201.5 L330 203.5 L332 205" stroke="#c9b3ec" stroke-width="0.7"/>
<path d="M263.9 348 L265.8 346.5 L270.6 348.2 L273.5 351 L276.8 362.4 L278.4 375.3 L276.8 382.6 L274.7 383 L270.6 383.4 L267.4 381.8 L265 376 L265.8 370.5 L267.1 364 L266.6 357.6 L265 351Z" fill="#cfcfcf"/>
<path d="M290.7 321.9 L296.5 318.4 L304.5 319.6 L309.1 317.3 L324.1 323 L331 325.3 L334.5 334.6 L339.1 339.2 L343.7 342.6 L347.2 348.4 L346 355.3 L344.9 358.8 L335.6 364.5 L328.7 368 L325.3 370.3 L321.8 366.8 L317.2 363.4 L310.3 362.2 L303.4 362.7 L298.8 362.2 L293 358.8 L290.7 353 L289.6 346.1 L290.7 339.2 L289.6 330Z" fill="#cfcfcf"/>
<path d="M290.6 352.7 L305.4 343.5 M290 333.2 L297.4 332.8 M297.4 332.8 L302 337.9 L305.4 343.5 M307.8 318 L297.4 332.8 M318.2 320.8 L311.8 346 M311.8 346 L308.5 345.3 L305.4 343.5 M314 362.8 L317.1 352.7 M317.1 352.7 L319.5 351.4 L322.2 350.7 M322.2 350.7 L346.5 352.3 M311.8 346 L314.7 348.4 L317.1 352.7 M331.1 325.6 L322.2 350.7" stroke="#c5c5c5" stroke-width="0.55"/>
<path d="M278 311.5 L283.8 313.8 L287.3 319.6 L290.7 321.9 L289.6 330 L290.7 339.2 L289.6 346.1 L290.7 353 L293 358.8 L295.3 364.5 L294.8 371.4 L293.2 378.5 L291.6 381.8 L290.8 386.6 L291.6 393 L290 397 L286 397.9 L281.9 395.5 L279.5 389.8 L277 383.4 L277.9 375.3 L276.3 362.4 L273 351 L270.6 348.7 L265.8 347 L262.6 344.7 L261.9 336.9 L263.1 327.6 L266.5 321.9 L272.3 317.3Z" fill="#dbcbe2"/>
<path d="M283.8 313.8 L268.3 327.3 M264 326.1 L268.3 327.3 M287.2 319.4 L278.9 334.8 M268.3 327.3 L273.7 330.4 L278.9 334.8 M278.9 334.8 L278.8 335.3 L279.6 336.1 M279.6 336.1 L272.9 347.9 L271.7 349.7 M281.9 367.5 L276.9 364.9 L276.6 364.6 M281.9 367.5 L295.1 367.6 M275.4 359.5 L289.5 353.2 L290.6 352.7 M289.5 397.1 L281.9 367.5 M279.6 336.1 L290.5 340.7" stroke="#cfbdd8" stroke-width="0.55"/>
<path d="M298.8 362.2 L303.4 362.7 L310.3 362.2 L317.2 363.4 L321.8 366.8 L325.3 370.3 L323 374.9 L317.2 377.2 L310.3 377.9 L303.4 376 L298.8 372.6 L296.5 368 L295.3 364.5 L293 358.8Z" fill="#dbd0e0"/>
<path d="M309.1 317.3 L313.8 319.6 L318.4 321.9 L324.1 323 L331 325.3 L333.3 331.1 L335.2 336.9 L329.9 334.6 L324.1 334.6 L321.8 340.3 L320.7 346.1 L316.1 349.5 L311.5 346.1 L309.1 341.5 L304.5 340.3 L298.8 335.7 L301.1 330 L303.4 323Z" fill="#a67cdc"/>
<path d="M313.8 319.6 L312 328 L309.1 341.5 M324.1 323 L322 330 L321.8 340.3" stroke="#c9b3ec" stroke-width="0.6"/>
<path d="M317.2 355.3 L324.1 354.1 L328.7 351.8 L333.3 354.1 L336.8 357.6 L341.4 357.6 L345.3 358.8 L341.4 362.2 L335.6 364.5 L328.7 368 L325.3 364.5 L323 359.9 L318.4 357.6Z" fill="#a67cdc"/>
<path d="M333.3 354.1 L331 360 L328.7 368" stroke="#c9b3ec" stroke-width="0.6"/>
</g>
<g font-size="6.9" font-weight="500" letter-spacing="0.73" stroke-width="1.2" stroke-linejoin="round" paint-order="stroke">
<text x="428.42" y="9.08" fill="#474747" stroke="#e6e6e6">山形県</text>
<text x="397.42" y="151.18" fill="#474747" stroke="#e6e6e6">福島県</text>
<text x="292.92" y="165.48" fill="#9b8fa6" stroke="#dbcbe2">新潟県</text>
<text x="402.62" y="203.28" fill="#474747" stroke="#e6e6e6">栃木県</text>
<text x="319.22" y="232.88" fill="#474747" stroke="#e6e6e6">群馬県</text>
<text x="458.42" y="230.68" fill="#474747" stroke="#e6e6e6">茨城県</text>
<text x="161.92" y="252.28" fill="#474747" stroke="#e6e6e6">富山県</text>
<text x="100.92" y="271.68" fill="#474747" stroke="#e6e6e6">石川県</text>
<text x="72.92" y="315.48" fill="#474747" stroke="#e6e6e6">福井県</text>
<text x="146.92" y="324.48" fill="#474747" stroke="#e6e6e6">岐阜県</text>
<text x="237.12" y="289.68" fill="#9a9a9a" stroke="#cfcfcf">長野県</text>
<text x="336.92" y="303.48" fill="#474747" stroke="#e6e6e6">埼玉県</text>
<text x="343.22" y="336.98" fill="#474747" stroke="#e6e6e6">東京都</text>
<text x="287.72" y="360.68" fill="#9b93a3" stroke="#d6cfdb">山梨県</text>
<text x="344.77" y="373.78" fill="#474747" stroke="#e6e6e6" letter-spacing="0.62">神奈川県</text>
<text x="431.92" y="395.48" fill="#474747" stroke="#e6e6e6">千葉県</text>
<text x="5.12" y="388.48" fill="#474747" stroke="#e6e6e6">京都府</text>
<text x="66.42" y="402.98" fill="#474747" stroke="#e6e6e6">滋賀県</text>
<text x="172.62" y="410.68" fill="#474747" stroke="#e6e6e6">愛知県</text>
</g>
<g font-size="6" letter-spacing="0.96">
<text x="382.76" y="94.76" fill="#a39aa8">磐梯朝日</text>
<text x="382.76" y="101.06" fill="#a39aa8">国立公園</text>
<text x="196.16" y="255.36" fill="#a8a8a8">中部山岳</text>
<text x="196.16" y="261.76" fill="#a8a8a8">国立公園</text>
<text x="274.38" y="232.46" fill="#a4a4a4" letter-spacing="0.91">上信越高原</text>
<text x="277.76" y="238.86" fill="#a4a4a4">国立公園</text>
<text x="295.31" y="316.76" fill="#a39cab" letter-spacing="0.875">秩父多摩甲斐</text>
<text x="302.06" y="322.96" fill="#a39cab">国立公園</text>
</g>
<text x="60.95" y="390.2" font-size="5" letter-spacing="0.45" fill="#9c9c9c" transform="rotate(-40 68.9 388.4)">琵琶湖</text>
<text x="389.3" y="290.3" font-size="5" letter-spacing="1.2" fill="#b0b0b0" transform="rotate(42 398 288.5)">利根川</text>
<rect x="386.5" y="407" width="213.5" height="6.2" fill="#f2f2f2" opacity="0.72"/>
<rect x="453" y="407" width="0.8" height="6.2" fill="#bdbdbd" opacity="0.5"/>
<rect x="518.3" y="407" width="0.8" height="6.2" fill="#bdbdbd" opacity="0.5"/>
<rect x="543.3" y="407" width="0.8" height="6.2" fill="#bdbdbd" opacity="0.5"/>
<g font-size="5.25" font-weight="500" fill="#333">
<text x="389.85" y="411.89" textLength="59.5" lengthAdjust="spacing">キーボード ショートカット</text>
<text x="456.85" y="411.89" textLength="57.8" lengthAdjust="spacing">地図データ ©2025 Google</text>
<text x="522.25" y="411.89" textLength="17.1" lengthAdjust="spacing">利用規約</text>
<text x="546.85" y="411.89" textLength="49.4" lengthAdjust="spacing">地図の誤りを報告する</text>
</g>
<rect x="574.5" y="361" width="20" height="40" rx="1" fill="#ebebeb"/>
<rect x="577.5" y="380.8" width="14" height="0.5" fill="#d8d8d8"/>
<path d="M580.2 371h8.6M584.5 366.7v8.6M580.5 391h8" stroke="#666" stroke-width="1.05" fill="none"/>
<rect x="0" y="412.3" width="600" height="0.9" fill="#efefef" opacity="0.6"/>
<rect x="0" y="413.2" width="600" height="20.8" fill="#4a4a4a"/>
<defs><linearGradient id="lg" x1="0" x2="1" y1="0" y2="0"><stop offset="0" stop-color="#cbc6cc"/><stop offset="0.3" stop-color="#d2c4d8"/><stop offset="0.52" stop-color="#dbbfe9"/><stop offset="0.66" stop-color="#c8a0e8"/><stop offset="0.82" stop-color="#a56de0"/><stop offset="1" stop-color="#8436d3"/></linearGradient></defs>
<rect x="60.4" y="418.4" width="36" height="10" fill="url(#lg)"/>
<rect x="0" y="0" width="600" height="1" fill="#7d7d7d"/>
<rect x="0" y="0" width="1" height="413" fill="#7d7d7d"/>
<rect x="598.7" y="0" width="1.3" height="413.2" fill="#8c8c8c"/>
</svg>
<div style="position:absolute;white-space:nowrap;line-height:1;will-change:transform;font-family:'Liberation Sans',sans-serif;left:5.3px;top:400.9px;font-size:9.6px;font-weight:bold;letter-spacing:-0.86px;color:#efefef;-webkit-text-stroke:0.8px #a2a2a2;paint-order:stroke fill">Google</div>
<div style="position:absolute;white-space:nowrap;line-height:1;will-change:transform;font-family:'Liberation Sans',sans-serif;left:8px;top:421.3px;font-size:5.9px;font-weight:bold;letter-spacing:-0.13px;color:#111">visited rate</div>
<div style="position:absolute;white-space:nowrap;line-height:1;will-change:transform;font-family:'Liberation Sans',sans-serif;left:45.6px;top:421.5px;font-size:5.6px;color:#1c1c1c">-1.00</div>
<div style="position:absolute;white-space:nowrap;line-height:1;will-change:transform;font-family:'Liberation Sans',sans-serif;left:98px;top:421.5px;font-size:5.6px;letter-spacing:0.18px;color:#1c1c1c">1.00</div>
</body></html>
